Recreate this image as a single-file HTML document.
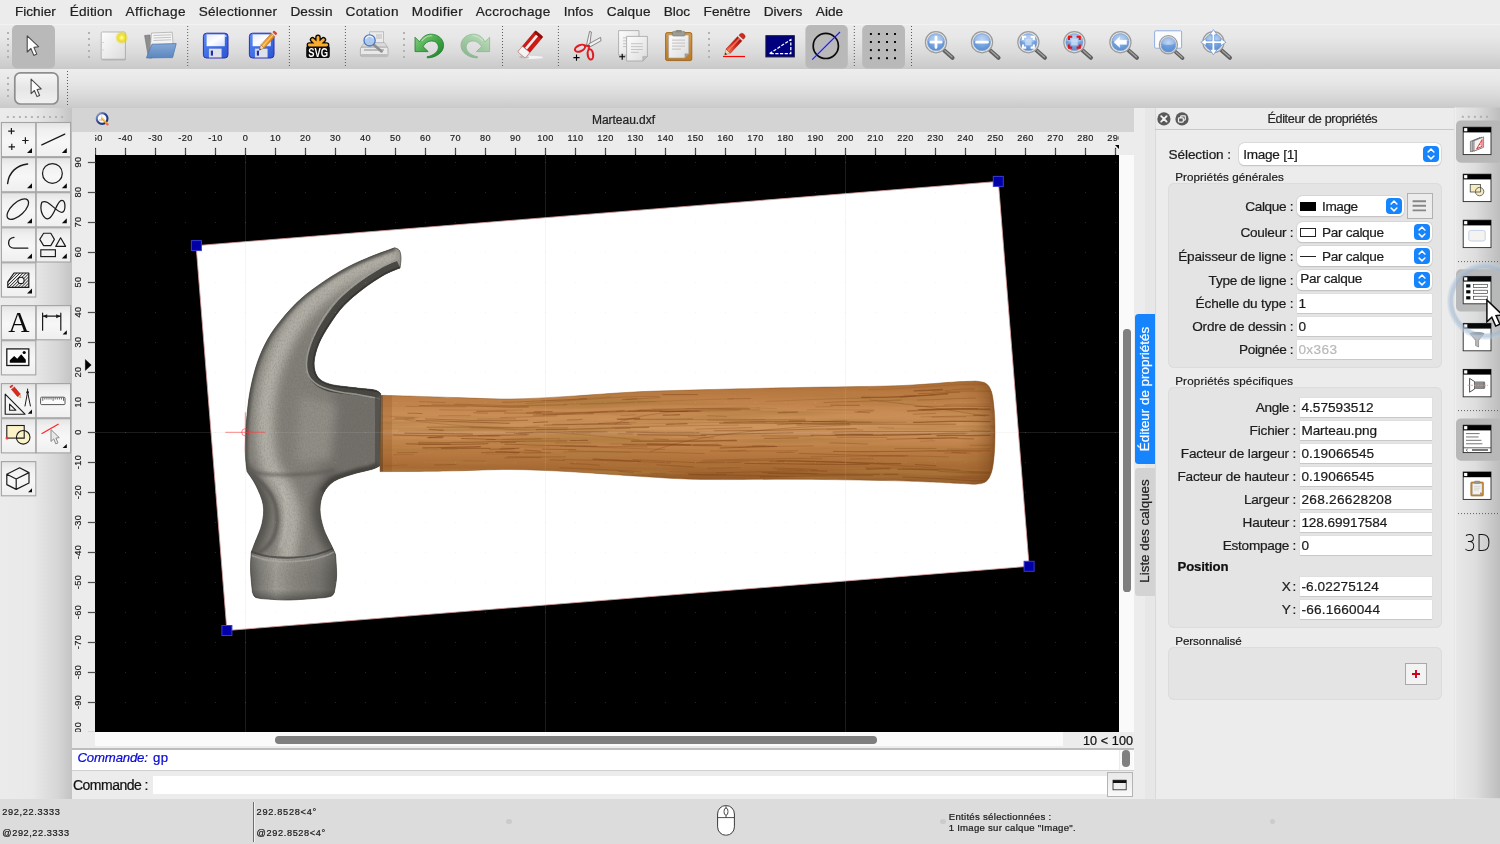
<!DOCTYPE html>
<html lang="fr"><head><meta charset="utf-8"><title>Marteau.dxf</title>
<style>
html,body{margin:0;padding:0;}
body{width:1500px;height:844px;overflow:hidden;background:#ececec;position:relative;
 font-family:"Liberation Sans",sans-serif;}
#app{position:absolute;left:0;top:0;width:1500px;height:844px;overflow:hidden;will-change:transform;}
.t{position:absolute;white-space:pre;font-family:"Liberation Sans",sans-serif;-webkit-text-stroke:.22px currentColor;}
svg{overflow:visible;display:block;}
svg.cv{overflow:hidden;}
</style></head>
<body><div id="app">
<!-- part_frame -->
<div class="menubar" style="position:absolute;left:0px;top:0px;width:1500px;height:24px;background:#ececec;"></div>
<span class="t" style="left:14.90px;top:3.63px;font-size:13.6px;line-height:16.32px;color:#222;letter-spacing:0.032px;">Fichier</span>
<span class="t" style="left:69.70px;top:3.63px;font-size:13.6px;line-height:16.32px;color:#222;letter-spacing:0.186px;">Édition</span>
<span class="t" style="left:125.60px;top:3.63px;font-size:13.6px;line-height:16.32px;color:#222;letter-spacing:0.430px;">Affichage</span>
<span class="t" style="left:198.70px;top:3.63px;font-size:13.6px;line-height:16.32px;color:#222;letter-spacing:0.263px;">Sélectionner</span>
<span class="t" style="left:290.40px;top:3.63px;font-size:13.6px;line-height:16.32px;color:#222;letter-spacing:0.126px;">Dessin</span>
<span class="t" style="left:345.50px;top:3.63px;font-size:13.6px;line-height:16.32px;color:#222;letter-spacing:0.335px;">Cotation</span>
<span class="t" style="left:411.70px;top:3.63px;font-size:13.6px;line-height:16.32px;color:#222;letter-spacing:0.404px;">Modifier</span>
<span class="t" style="left:475.70px;top:3.63px;font-size:13.6px;line-height:16.32px;color:#222;letter-spacing:0.309px;">Accrochage</span>
<span class="t" style="left:563.80px;top:3.63px;font-size:13.6px;line-height:16.32px;color:#222;letter-spacing:-0.021px;">Infos</span>
<span class="t" style="left:606.70px;top:3.63px;font-size:13.6px;line-height:16.32px;color:#222;letter-spacing:0.140px;">Calque</span>
<span class="t" style="left:663.70px;top:3.63px;font-size:13.6px;line-height:16.32px;color:#222;letter-spacing:-0.019px;">Bloc</span>
<span class="t" style="left:703.60px;top:3.63px;font-size:13.6px;line-height:16.32px;color:#222;letter-spacing:0.005px;">Fenêtre</span>
<span class="t" style="left:763.70px;top:3.63px;font-size:13.6px;line-height:16.32px;color:#222;letter-spacing:0.013px;">Divers</span>
<span class="t" style="left:815.80px;top:3.63px;font-size:13.6px;line-height:16.32px;color:#222;letter-spacing:0.027px;">Aide</span>
<div class="toolbar1" style="position:absolute;left:0px;top:24px;width:1500px;height:45px;background:linear-gradient(#f7f7f7 0%,#ebebeb 3%,#e7e7e7 30%,#dadada 65%,#c9c9c9 100%);"></div>
<div class="toolbar2" style="position:absolute;left:0px;top:69px;width:1500px;height:38.5px;background:linear-gradient(#ededed 0%,#e8e8e8 30%,#dbdbdb 65%,#cacaca 100%);"></div>
<div class="toolpanel" style="position:absolute;left:0px;top:107.5px;width:72px;height:691px;background:linear-gradient(90deg,#ebebeb 0%,#e9e9e9 45%,#d6d6d6 80%,#c3c3c3 100%);"></div>
<div class="tabbar" style="position:absolute;left:72px;top:107.5px;width:1062px;height:24px;background:#d4d4d4;"></div>
<span class="t" style="left:592.00px;top:113.34px;font-size:12px;line-height:14.40px;color:#222;letter-spacing:-0.036px;">Marteau.dxf</span>
<svg style="position:absolute;left:94px;top:110px;" width="18" height="18" viewBox="0 0 18 18"><defs><linearGradient id="gQ" x1="0" y1="0" x2="1" y2="1"><stop offset="0" stop-color="#a9b6d8"/><stop offset=".45" stop-color="#2a4592"/><stop offset="1" stop-color="#16307a"/></linearGradient></defs><circle cx="8.1" cy="8.5" r="5.4" fill="#fbfbfb" stroke="url(#gQ)" stroke-width="2.1"/><path d="M5 9.6 h3.4 M7.6 5.4 v5.2" stroke="#c9c9c9" stroke-width=".7"/><path d="M5.2 10.4 h3" stroke="#e9a0a0" stroke-width=".6"/><path d="M8.2 8.6 L12.6 13.4" stroke="#f7a416" stroke-width="2.1" stroke-linecap="round"/><path d="M8.4 8.2 L11 11" stroke="#ffd76a" stroke-width=".8" stroke-linecap="round"/><circle cx="13.3" cy="14.2" r="1.25" fill="#e46a6a"/></svg>
<div class="hruler" style="position:absolute;left:72px;top:131.5px;width:1062px;height:23.5px;background:#ececec;"></div>
<div class="vruler" style="position:absolute;left:72px;top:155px;width:23px;height:577px;background:#ececec;"></div>
<div class="canvas" style="position:absolute;left:95px;top:155px;width:1024px;height:577px;background:#000;"></div>
<div class="vscroll" style="position:absolute;left:1119px;top:155px;width:15px;height:577px;background:#fafafa;"></div>
<div style="position:absolute;left:1123.4px;top:329.4px;width:7.2px;height:262.3px;background:#7f7f7f;border-radius:3.6px;"></div>
<div style="position:absolute;left:72px;top:732px;width:1062px;height:14px;background:#fafafa;"></div>
<div style="position:absolute;left:72px;top:746px;width:1062px;height:2.5px;background:#ececec;"></div>
<div style="position:absolute;left:72px;top:732px;width:23px;height:16.5px;background:#ececec;"></div>
<div style="position:absolute;left:274.7px;top:736.1px;width:602px;height:7.6px;background:#7f7f7f;border-radius:3.8px;"></div>
<div style="position:absolute;left:1063px;top:732px;width:71px;height:16.5px;background:#ececec;"></div>
<span class="t" style="left:1083.00px;top:733.57px;font-size:12.6px;line-height:15.12px;color:#111;letter-spacing:0.086px;">10 &lt; 100</span>
<div style="position:absolute;left:1134px;top:107.5px;width:10.5px;height:691px;background:#ececec;"></div>
<div style="position:absolute;left:1144.5px;top:107.5px;width:10.5px;height:691px;background:#e7e7e7;"></div>
<div style="position:absolute;left:72px;top:748.3px;width:1062px;height:1.6px;background:#bdbdbd;"></div>
<div class="history" style="position:absolute;left:72px;top:749.9px;width:1062px;height:20.1px;background:#fff;"></div>
<div style="position:absolute;left:72px;top:770px;width:1062px;height:1px;background:#cfcfcf;"></div>
<span class="t" style="left:77.50px;top:750.41px;font-size:13.2px;line-height:15.84px;color:#0a0ad2;letter-spacing:-0.175px;font-style:italic;">Commande:</span>
<span class="t" style="left:153.00px;top:750.41px;font-size:13.2px;line-height:15.84px;color:#0a0ad2;letter-spacing:0.317px;">gp</span>
<div style="position:absolute;left:1118.6px;top:750px;width:14.4px;height:20px;background:#fafafa;border-left:1px solid #ebebeb;box-sizing:border-box;"></div>
<div style="position:absolute;left:1122.1px;top:750.2px;width:7.9px;height:16.5px;background:#7f7f7f;border-radius:4px;"></div>
<div class="cmdline" style="position:absolute;left:72px;top:771px;width:1062px;height:27.5px;background:#ececec;"></div>
<span class="t" style="left:73.00px;top:777.35px;font-size:14px;line-height:16.80px;color:#111;letter-spacing:-0.516px;">Commande :</span>
<div style="position:absolute;left:153px;top:775.7px;width:953.6px;height:18.5px;background:#fff;"></div>
<div style="position:absolute;left:1107.2px;top:772.4px;width:25.8px;height:25.1px;background:linear-gradient(#e9e9e9,#f9f9f9);border:1px solid #b4b4b4;box-sizing:border-box;"></div>
<svg style="position:absolute;left:1112.2px;top:779.2px;" width="16" height="13" viewBox="0 0 16 13"><rect x="1" y="1.2" width="13.2" height="9.6" fill="#eee" stroke="#222" stroke-width=".8"/><rect x="1" y="1.2" width="13.2" height="2.8" fill="#111"/></svg>
<div class="statusbar" style="position:absolute;left:0px;top:798.5px;width:1500px;height:45.5px;background:#dcdcdc;"></div>
<span class="t" style="left:2.30px;top:807.49px;font-size:9.2px;line-height:11.04px;color:#1a1a1a;letter-spacing:0.654px;">292,22.3333</span>
<span class="t" style="left:2.30px;top:827.89px;font-size:9.2px;line-height:11.04px;color:#1a1a1a;letter-spacing:0.573px;">@292,22.3333</span>
<div style="position:absolute;left:253px;top:802px;width:1px;height:40px;background:#6e6e6e;"></div>
<div style="position:absolute;left:254px;top:802px;width:1px;height:40px;background:#f2f2f2;"></div>
<span class="t" style="left:256.60px;top:807.49px;font-size:9.2px;line-height:11.04px;color:#1a1a1a;letter-spacing:0.706px;">292.8528&lt;4°</span>
<span class="t" style="left:256.60px;top:827.89px;font-size:9.2px;line-height:11.04px;color:#1a1a1a;letter-spacing:0.620px;">@292.8528&lt;4°</span>
<div style="position:absolute;left:506.3px;top:819px;width:5.4px;height:5.4px;background:#cbcbcb;border-radius:50%;"></div>
<div style="position:absolute;left:940.3px;top:819px;width:5.4px;height:5.4px;background:#cbcbcb;border-radius:50%;"></div>
<div style="position:absolute;left:1269.8px;top:819px;width:5.4px;height:5.4px;background:#cbcbcb;border-radius:50%;"></div>
<span class="t" style="left:948.70px;top:810.81px;font-size:9.6px;line-height:11.52px;color:#1a1a1a;letter-spacing:0.293px;">Entités sélectionnées :</span>
<span class="t" style="left:948.70px;top:822.41px;font-size:9.6px;line-height:11.52px;color:#1a1a1a;letter-spacing:0.251px;">1 Image sur calque "Image".</span>
<svg style="position:absolute;left:715px;top:803px;" width="22" height="35" viewBox="0 0 22 35"><rect x="2.6" y="2.6" width="16.8" height="29.6" rx="8" ry="8.4" fill="#fff" stroke="#3a3a3a" stroke-width="1"/><path d="M2.6 14.6 H19.4 M11 2.6 V14.6" stroke="#3a3a3a" stroke-width="0.9" fill="none"/><ellipse cx="11" cy="8.6" rx="2" ry="3.6" fill="#fff" stroke="#3a3a3a" stroke-width="0.9"/></svg>
<!-- part_canvas -->
<svg class="cv" style="position:absolute;left:0;top:0" width="1500" height="844" viewBox="0 0 1500 844"><defs><clipPath id="cvclip"><rect x="95" y="155" width="1024" height="577"/></clipPath><clipPath id="hrclip"><rect x="95" y="131.5" width="1024" height="23.5"/></clipPath><clipPath id="vrclip"><rect x="72" y="155" width="23" height="577"/></clipPath><clipPath id="headclip"><path d="M394.7 247.8 C390.9 249.2 379.9 253.0 372.2 256.1 C364.5 259.2 356.4 262.6 348.5 266.7 C340.6 270.8 332.7 275.6 324.8 280.9 C316.9 286.2 308.2 292.4 301.1 298.7 C294.0 305.0 287.6 312.2 282.1 318.9 C276.6 325.6 272.0 331.7 267.9 339.0 C263.8 346.3 260.3 354.0 257.3 362.7 C254.3 371.4 251.9 381.6 250.1 391.1 C248.3 400.6 247.4 411.5 246.6 419.6 C245.8 427.8 245.7 433.7 245.5 440.0 C245.3 446.3 245.2 452.1 245.5 457.4 C245.8 462.7 246.8 469.2 247.1 471.6 C248.6 474.0 253.4 480.3 256.1 485.8 C258.8 491.3 262.2 498.5 263.2 504.8 C264.2 511.1 263.4 517.4 262.0 523.7 C260.6 530.0 256.7 538.0 254.9 542.7 C253.1 547.5 251.9 550.6 251.3 552.2 C251.2 554.3 250.7 561.0 250.6 565.0 C250.5 569.0 250.6 571.3 250.9 575.9 C251.2 580.5 252.2 589.7 252.5 592.5 C252.9 593.2 253.6 596.0 255.0 597.0 C256.4 598.0 259.8 598.3 260.8 598.6 C265.5 598.8 278.5 600.2 289.2 600.0 C299.9 599.8 318.9 598.0 324.8 597.6 C325.9 597.3 329.9 596.9 331.5 596.0 C333.1 595.1 333.8 593.1 334.3 592.5 C334.7 589.7 336.4 582.2 336.6 575.9 C336.8 569.6 335.7 558.1 335.5 554.5 C334.9 553.1 332.5 547.7 331.9 546.3 C330.5 543.3 325.6 534.6 323.6 528.5 C321.6 522.4 320.0 515.4 320.0 509.5 C320.0 503.6 321.2 497.6 323.6 492.9 C326.0 488.2 329.4 484.2 334.3 481.1 C339.2 478.0 346.9 476.0 353.2 474.0 C359.5 472.0 367.8 470.6 372.2 469.2 C376.6 467.8 378.4 466.4 379.6 465.9 C379.8 453.8 380.4 405.6 380.6 393.5 C379.6 392.9 379.1 391.0 374.5 390.0 C369.9 389.0 360.7 388.6 353.2 387.6 C345.7 386.6 335.4 385.8 329.5 384.0 C323.6 382.2 320.3 380.4 317.7 376.9 C315.1 373.3 313.9 368.2 314.1 362.7 C314.3 357.2 316.3 350.0 318.9 343.7 C321.5 337.4 325.4 331.1 329.5 324.8 C333.6 318.5 338.2 311.7 343.7 305.8 C349.2 299.9 356.0 294.3 362.7 289.2 C369.4 284.1 377.8 278.6 384.0 275.0 C390.2 271.4 397.4 269.1 400.1 267.9 C400.2 266.2 401.1 260.9 401.0 258.0 C400.9 255.1 400.4 252.0 399.4 250.3 C398.3 248.6 395.5 248.2 394.7 247.8 Z"/></clipPath><clipPath id="handclip"><path d="M380 395.3 C386.7 395.5 407.0 396.0 420.0 396.4 C433.0 396.8 442.9 397.2 458.0 397.6 C473.1 398.0 492.5 399.2 510.8 399.0 C529.1 398.8 547.5 397.6 568.0 396.4 C588.5 395.2 612.0 393.1 634.0 392.0 C656.0 390.9 672.3 390.6 700.0 389.8 C727.7 389.1 768.7 388.1 800.0 387.5 C831.3 386.9 866.3 386.6 888.0 386.0 C909.7 385.4 919.0 384.5 930.0 383.8 C941.0 383.1 946.3 382.4 954.0 382.0 C961.7 381.6 972.3 381.2 976.0 381.1 C977.7 381.5 983.4 381.6 986.0 383.4 C988.6 385.2 990.2 387.6 991.6 392.0 C993.0 396.4 993.6 403.3 994.2 410.0 C994.8 416.7 995.0 424.5 995.0 432.0 C995.0 439.5 994.8 448.3 994.2 455.0 C993.6 461.7 993.0 467.6 991.6 472.0 C990.2 476.4 988.6 479.6 986.0 481.6 C983.4 483.7 977.7 483.9 976.0 484.3 C972.3 484.1 961.7 483.6 954.0 483.2 C946.3 482.8 941.0 482.4 930.0 482.0 C919.0 481.6 909.7 481.1 888.0 480.6 C866.3 480.2 831.3 479.5 800.0 479.3 C768.7 479.1 727.7 479.9 700.0 479.4 C672.3 478.8 656.0 477.3 634.0 476.0 C612.0 474.7 588.5 472.7 568.0 471.6 C547.5 470.5 529.1 469.6 510.8 469.5 C492.5 469.4 473.1 470.5 458.0 470.8 C442.9 471.1 433.0 471.3 420.0 471.4 C407.0 471.5 386.7 471.6 380.0 471.6 Z"/></clipPath><linearGradient id="gHead" x1="245" y1="0" x2="381" y2="0" gradientUnits="userSpaceOnUse"><stop offset="0" stop-color="#6f6d67"/><stop offset=".06" stop-color="#8f8d86"/><stop offset=".22" stop-color="#aeaca5"/><stop offset=".42" stop-color="#98968f"/><stop offset=".7" stop-color="#86847d"/><stop offset="1" stop-color="#6a6862"/></linearGradient><linearGradient id="gClaw" x1="270" y1="300" x2="330" y2="345" gradientUnits="userSpaceOnUse"><stop offset="0" stop-color="#77756f"/><stop offset=".3" stop-color="#a6a49d"/><stop offset=".62" stop-color="#9a9891"/><stop offset=".8" stop-color="#6e6c66"/><stop offset="1" stop-color="#4a4843"/></linearGradient><linearGradient id="gCyl" x1="250" y1="0" x2="337" y2="0" gradientUnits="userSpaceOnUse"><stop offset="0" stop-color="#5d5b56"/><stop offset=".12" stop-color="#7f7d77"/><stop offset=".3" stop-color="#a19e96"/><stop offset=".5" stop-color="#8a877f"/><stop offset=".8" stop-color="#77756f"/><stop offset="1" stop-color="#55534e"/></linearGradient><linearGradient id="gCylV" x1="0" y1="548" x2="0" y2="600" gradientUnits="userSpaceOnUse"><stop offset="0" stop-color="#000" stop-opacity=".25"/><stop offset=".18" stop-color="#fff" stop-opacity=".08"/><stop offset=".8" stop-color="#000" stop-opacity="0"/><stop offset="1" stop-color="#000" stop-opacity=".35"/></linearGradient><linearGradient id="gNeck" x1="254" y1="0" x2="332" y2="0" gradientUnits="userSpaceOnUse"><stop offset="0" stop-color="#5a5853"/><stop offset=".2" stop-color="#7b7973"/><stop offset=".42" stop-color="#a19f98"/><stop offset=".62" stop-color="#8d8b84"/><stop offset=".85" stop-color="#716f69"/><stop offset="1" stop-color="#504e49"/></linearGradient><linearGradient id="gWood" x1="0" y1="382" x2="0" y2="484" gradientUnits="userSpaceOnUse"><stop offset="0" stop-color="#a86a33"/><stop offset=".1" stop-color="#b97a42"/><stop offset=".3" stop-color="#c88c54"/><stop offset=".45" stop-color="#ce955e"/><stop offset=".68" stop-color="#bb7c43"/><stop offset=".88" stop-color="#a26630"/><stop offset="1" stop-color="#885024"/></linearGradient><linearGradient id="gWoodEnd" x1="960" y1="0" x2="996" y2="0" gradientUnits="userSpaceOnUse"><stop offset="0" stop-color="#7a4316" stop-opacity="0"/><stop offset=".45" stop-color="#7a4316" stop-opacity=".12"/><stop offset=".8" stop-color="#6e3a12" stop-opacity=".38"/><stop offset="1" stop-color="#5a2e0c" stop-opacity=".6"/></linearGradient><filter id="fWood" x="0" y="0" width="100%" height="100%"><feTurbulence type="fractalNoise" baseFrequency="0.006 0.16" numOctaves="3" seed="4" result="n"/><feColorMatrix in="n" type="matrix" values="0 0 0 0 0.42  0 0 0 0 0.2  0 0 0 0 0.05  0 0 0 -2.6 1.45"/></filter><filter id="fMetal" x="0" y="0" width="100%" height="100%"><feTurbulence type="fractalNoise" baseFrequency="0.7 0.5" numOctaves="2" seed="9" result="n"/><feColorMatrix in="n" type="matrix" values="0 0 0 0 0.1  0 0 0 0 0.1  0 0 0 0 0.1  0 0 0 -1.6 0.95"/></filter><filter id="fB6" x="-20%" y="-20%" width="140%" height="140%"><feGaussianBlur stdDeviation="5"/></filter><filter id="fB2" x="-20%" y="-20%" width="140%" height="140%"><feGaussianBlur stdDeviation="1.6"/></filter><pattern id="grid" x="245.0" y="432.0" width="30" height="30" patternUnits="userSpaceOnUse"><rect x="0" y="0" width="1" height="1" fill="#c8c8c8" fill-opacity=".2"/></pattern></defs><g clip-path="url(#hrclip)" font-family="Liberation Sans, sans-serif" font-size="9.2" fill="#1c1c1c" stroke="#1c1c1c" stroke-width=".18" letter-spacing=".45"><rect x="65" y="148" width="1" height="7" fill="#5e5e5e"/><text x="65.5" y="141.3" text-anchor="middle">-60</text><rect x="95" y="148" width="1" height="7" fill="#5e5e5e"/><text x="95.5" y="141.3" text-anchor="middle">-50</text><rect x="125" y="148" width="1" height="7" fill="#5e5e5e"/><text x="125.5" y="141.3" text-anchor="middle">-40</text><rect x="155" y="148" width="1" height="7" fill="#5e5e5e"/><text x="155.5" y="141.3" text-anchor="middle">-30</text><rect x="185" y="148" width="1" height="7" fill="#5e5e5e"/><text x="185.5" y="141.3" text-anchor="middle">-20</text><rect x="215" y="148" width="1" height="7" fill="#5e5e5e"/><text x="215.5" y="141.3" text-anchor="middle">-10</text><rect x="245" y="148" width="1" height="7" fill="#5e5e5e"/><text x="245.5" y="141.3" text-anchor="middle">0</text><rect x="275" y="148" width="1" height="7" fill="#5e5e5e"/><text x="275.5" y="141.3" text-anchor="middle">10</text><rect x="305" y="148" width="1" height="7" fill="#5e5e5e"/><text x="305.5" y="141.3" text-anchor="middle">20</text><rect x="335" y="148" width="1" height="7" fill="#5e5e5e"/><text x="335.5" y="141.3" text-anchor="middle">30</text><rect x="365" y="148" width="1" height="7" fill="#5e5e5e"/><text x="365.5" y="141.3" text-anchor="middle">40</text><rect x="395" y="148" width="1" height="7" fill="#5e5e5e"/><text x="395.5" y="141.3" text-anchor="middle">50</text><rect x="425" y="148" width="1" height="7" fill="#5e5e5e"/><text x="425.5" y="141.3" text-anchor="middle">60</text><rect x="455" y="148" width="1" height="7" fill="#5e5e5e"/><text x="455.5" y="141.3" text-anchor="middle">70</text><rect x="485" y="148" width="1" height="7" fill="#5e5e5e"/><text x="485.5" y="141.3" text-anchor="middle">80</text><rect x="515" y="148" width="1" height="7" fill="#5e5e5e"/><text x="515.5" y="141.3" text-anchor="middle">90</text><rect x="545" y="148" width="1" height="7" fill="#5e5e5e"/><text x="545.5" y="141.3" text-anchor="middle">100</text><rect x="575" y="148" width="1" height="7" fill="#5e5e5e"/><text x="575.5" y="141.3" text-anchor="middle">110</text><rect x="605" y="148" width="1" height="7" fill="#5e5e5e"/><text x="605.5" y="141.3" text-anchor="middle">120</text><rect x="635" y="148" width="1" height="7" fill="#5e5e5e"/><text x="635.5" y="141.3" text-anchor="middle">130</text><rect x="665" y="148" width="1" height="7" fill="#5e5e5e"/><text x="665.5" y="141.3" text-anchor="middle">140</text><rect x="695" y="148" width="1" height="7" fill="#5e5e5e"/><text x="695.5" y="141.3" text-anchor="middle">150</text><rect x="725" y="148" width="1" height="7" fill="#5e5e5e"/><text x="725.5" y="141.3" text-anchor="middle">160</text><rect x="755" y="148" width="1" height="7" fill="#5e5e5e"/><text x="755.5" y="141.3" text-anchor="middle">170</text><rect x="785" y="148" width="1" height="7" fill="#5e5e5e"/><text x="785.5" y="141.3" text-anchor="middle">180</text><rect x="815" y="148" width="1" height="7" fill="#5e5e5e"/><text x="815.5" y="141.3" text-anchor="middle">190</text><rect x="845" y="148" width="1" height="7" fill="#5e5e5e"/><text x="845.5" y="141.3" text-anchor="middle">200</text><rect x="875" y="148" width="1" height="7" fill="#5e5e5e"/><text x="875.5" y="141.3" text-anchor="middle">210</text><rect x="905" y="148" width="1" height="7" fill="#5e5e5e"/><text x="905.5" y="141.3" text-anchor="middle">220</text><rect x="935" y="148" width="1" height="7" fill="#5e5e5e"/><text x="935.5" y="141.3" text-anchor="middle">230</text><rect x="965" y="148" width="1" height="7" fill="#5e5e5e"/><text x="965.5" y="141.3" text-anchor="middle">240</text><rect x="995" y="148" width="1" height="7" fill="#5e5e5e"/><text x="995.5" y="141.3" text-anchor="middle">250</text><rect x="1025" y="148" width="1" height="7" fill="#5e5e5e"/><text x="1025.5" y="141.3" text-anchor="middle">260</text><rect x="1055" y="148" width="1" height="7" fill="#5e5e5e"/><text x="1055.5" y="141.3" text-anchor="middle">270</text><rect x="1085" y="148" width="1" height="7" fill="#5e5e5e"/><text x="1085.5" y="141.3" text-anchor="middle">280</text><rect x="1115" y="148" width="1" height="7" fill="#5e5e5e"/><text x="1115.5" y="141.3" text-anchor="middle">290</text><rect x="1145" y="148" width="1" height="7" fill="#5e5e5e"/><text x="1145.5" y="141.3" text-anchor="middle">300</text></g><g clip-path="url(#hrclip)"><path d="M1115 145 L1127 145 L1121 151 Z" fill="#000"/></g><g clip-path="url(#vrclip)" font-family="Liberation Sans, sans-serif" font-size="9.2" fill="#1c1c1c" stroke="#1c1c1c" stroke-width=".18" letter-spacing=".45"><rect x="88" y="762" width="7" height="1" fill="#5e5e5e"/><text transform="translate(81.4 761.9) rotate(-90)" text-anchor="middle">-110</text><rect x="88" y="732" width="7" height="1" fill="#5e5e5e"/><text transform="translate(81.4 731.9) rotate(-90)" text-anchor="middle">-100</text><rect x="88" y="702" width="7" height="1" fill="#5e5e5e"/><text transform="translate(81.4 701.9) rotate(-90)" text-anchor="middle">-90</text><rect x="88" y="672" width="7" height="1" fill="#5e5e5e"/><text transform="translate(81.4 671.9) rotate(-90)" text-anchor="middle">-80</text><rect x="88" y="642" width="7" height="1" fill="#5e5e5e"/><text transform="translate(81.4 641.9) rotate(-90)" text-anchor="middle">-70</text><rect x="88" y="612" width="7" height="1" fill="#5e5e5e"/><text transform="translate(81.4 611.9) rotate(-90)" text-anchor="middle">-60</text><rect x="88" y="582" width="7" height="1" fill="#5e5e5e"/><text transform="translate(81.4 581.9) rotate(-90)" text-anchor="middle">-50</text><rect x="88" y="552" width="7" height="1" fill="#5e5e5e"/><text transform="translate(81.4 551.9) rotate(-90)" text-anchor="middle">-40</text><rect x="88" y="522" width="7" height="1" fill="#5e5e5e"/><text transform="translate(81.4 521.9) rotate(-90)" text-anchor="middle">-30</text><rect x="88" y="492" width="7" height="1" fill="#5e5e5e"/><text transform="translate(81.4 491.9) rotate(-90)" text-anchor="middle">-20</text><rect x="88" y="462" width="7" height="1" fill="#5e5e5e"/><text transform="translate(81.4 461.9) rotate(-90)" text-anchor="middle">-10</text><rect x="88" y="432" width="7" height="1" fill="#5e5e5e"/><text transform="translate(81.4 431.9) rotate(-90)" text-anchor="middle">0</text><rect x="88" y="402" width="7" height="1" fill="#5e5e5e"/><text transform="translate(81.4 401.9) rotate(-90)" text-anchor="middle">10</text><rect x="88" y="372" width="7" height="1" fill="#5e5e5e"/><text transform="translate(81.4 371.9) rotate(-90)" text-anchor="middle">20</text><rect x="88" y="342" width="7" height="1" fill="#5e5e5e"/><text transform="translate(81.4 341.9) rotate(-90)" text-anchor="middle">30</text><rect x="88" y="312" width="7" height="1" fill="#5e5e5e"/><text transform="translate(81.4 311.9) rotate(-90)" text-anchor="middle">40</text><rect x="88" y="282" width="7" height="1" fill="#5e5e5e"/><text transform="translate(81.4 281.9) rotate(-90)" text-anchor="middle">50</text><rect x="88" y="252" width="7" height="1" fill="#5e5e5e"/><text transform="translate(81.4 251.9) rotate(-90)" text-anchor="middle">60</text><rect x="88" y="222" width="7" height="1" fill="#5e5e5e"/><text transform="translate(81.4 221.9) rotate(-90)" text-anchor="middle">70</text><rect x="88" y="192" width="7" height="1" fill="#5e5e5e"/><text transform="translate(81.4 191.9) rotate(-90)" text-anchor="middle">80</text><rect x="88" y="162" width="7" height="1" fill="#5e5e5e"/><text transform="translate(81.4 161.9) rotate(-90)" text-anchor="middle">90</text><rect x="88" y="132" width="7" height="1" fill="#5e5e5e"/><text transform="translate(81.4 131.9) rotate(-90)" text-anchor="middle">100</text><path d="M85.2 359.3 L91.4 365 L85.2 370.7 Z" fill="#000"/></g><g clip-path="url(#cvclip)"><g transform="translate(226.9 630.5) rotate(-4.57593512)"><rect x="0" y="-386.1" width="804.8" height="386.1" fill="#fff" stroke="#d8a0a0" stroke-width=".8"/></g><path d="M380 395.3 C386.7 395.5 407.0 396.0 420.0 396.4 C433.0 396.8 442.9 397.2 458.0 397.6 C473.1 398.0 492.5 399.2 510.8 399.0 C529.1 398.8 547.5 397.6 568.0 396.4 C588.5 395.2 612.0 393.1 634.0 392.0 C656.0 390.9 672.3 390.6 700.0 389.8 C727.7 389.1 768.7 388.1 800.0 387.5 C831.3 386.9 866.3 386.6 888.0 386.0 C909.7 385.4 919.0 384.5 930.0 383.8 C941.0 383.1 946.3 382.4 954.0 382.0 C961.7 381.6 972.3 381.2 976.0 381.1 C977.7 381.5 983.4 381.6 986.0 383.4 C988.6 385.2 990.2 387.6 991.6 392.0 C993.0 396.4 993.6 403.3 994.2 410.0 C994.8 416.7 995.0 424.5 995.0 432.0 C995.0 439.5 994.8 448.3 994.2 455.0 C993.6 461.7 993.0 467.6 991.6 472.0 C990.2 476.4 988.6 479.6 986.0 481.6 C983.4 483.7 977.7 483.9 976.0 484.3 C972.3 484.1 961.7 483.6 954.0 483.2 C946.3 482.8 941.0 482.4 930.0 482.0 C919.0 481.6 909.7 481.1 888.0 480.6 C866.3 480.2 831.3 479.5 800.0 479.3 C768.7 479.1 727.7 479.9 700.0 479.4 C672.3 478.8 656.0 477.3 634.0 476.0 C612.0 474.7 588.5 472.7 568.0 471.6 C547.5 470.5 529.1 469.6 510.8 469.5 C492.5 469.4 473.1 470.5 458.0 470.8 C442.9 471.1 433.0 471.3 420.0 471.4 C407.0 471.5 386.7 471.6 380.0 471.6 Z" fill="url(#gWood)"/><g clip-path="url(#handclip)"><rect x="378" y="378" width="620" height="110" filter="url(#fWood)" opacity=".75"/><g stroke="#7d4216" fill="none" stroke-linecap="round"><path d="M714.3 430.7 C717.6 430.7 727.8 430.7 734.6 430.7 C741.3 430.7 748.1 430.6 754.9 430.6 C761.6 430.5 768.4 430.3 775.2 430.2 C781.9 430.0 788.7 429.8 795.5 429.6 C802.2 429.5 809.0 429.3 815.8 429.2 C822.6 429.0 829.3 428.9 836.1 428.8 C842.9 428.6 853.0 428.5 856.4 428.5" stroke-opacity="0.40" stroke-width="1.0"/><path d="M686.0 408.7 C689.1 408.7 698.3 408.8 704.4 408.7 C710.5 408.7 716.7 408.6 722.8 408.5 C728.9 408.5 735.0 408.3 741.2 408.2 C747.3 408.1 756.5 407.8 759.5 407.7" stroke-opacity="0.24" stroke-width="0.7"/><path d="M861.7 397.4 C865.3 397.3 876.0 397.4 883.2 397.3 C890.4 397.1 897.6 396.8 904.8 396.5 C911.9 396.2 919.1 395.8 926.3 395.4 C933.5 394.9 944.2 394.0 947.8 393.7" stroke-opacity="0.59" stroke-width="1.3"/><path d="M747.2 446.5 C748.7 446.4 753.1 446.2 756.0 446.0 C759.0 445.8 763.4 445.6 764.9 445.5" stroke-opacity="0.41" stroke-width="0.5"/><path d="M526.7 412.9 C527.9 412.8 531.5 412.8 533.8 412.8 C536.2 412.7 539.7 412.7 540.9 412.7" stroke-opacity="0.38" stroke-width="1.2"/><path d="M761.8 435.8 C764.6 435.8 773.2 435.9 778.9 435.9 C784.6 436.0 790.4 436.0 796.1 436.0 C801.8 436.0 810.4 436.0 813.2 436.0" stroke-opacity="0.38" stroke-width="0.7"/><path d="M971.5 481.3 C973.0 481.4 977.6 481.6 980.7 481.8 C983.8 481.9 988.5 482.0 990.0 482.0" stroke-opacity="0.33" stroke-width="0.7"/><path d="M425.4 418.9 C428.8 419.0 439.0 419.4 445.8 419.6 C452.7 419.8 459.5 420.0 466.3 420.2 C473.1 420.4 479.9 420.5 486.7 420.6 C493.5 420.7 500.3 420.8 507.1 420.8 C513.9 420.7 524.1 420.3 527.5 420.2" stroke-opacity="0.54" stroke-width="0.8"/><path d="M883.9 474.3 C885.1 474.3 888.6 474.3 890.9 474.3 C893.2 474.3 896.7 474.4 897.9 474.4" stroke-opacity="0.56" stroke-width="0.9"/><path d="M618.5 471.4 C619.7 471.5 623.4 471.8 625.9 472.0 C628.3 472.3 632.0 472.6 633.3 472.7" stroke-opacity="0.51" stroke-width="0.7"/><path d="M580.2 404.5 C583.9 404.4 594.8 404.0 602.1 403.7 C609.4 403.4 616.8 403.0 624.1 402.7 C631.4 402.4 638.7 402.1 646.0 401.8 C653.3 401.5 660.6 401.3 667.9 401.0 C675.2 400.7 682.5 400.4 689.8 400.1 C697.1 399.8 704.4 399.6 711.7 399.4 C719.0 399.2 730.0 398.9 733.6 398.8" stroke-opacity="0.25" stroke-width="0.7"/><path d="M419.3 405.5 C423.0 405.5 433.9 405.6 441.2 405.7 C448.5 405.7 455.8 405.8 463.1 405.9 C470.3 406.1 477.6 406.2 484.9 406.4 C492.2 406.6 499.5 407.0 506.8 407.0 C514.1 407.1 525.0 406.8 528.6 406.8" stroke-opacity="0.42" stroke-width="0.9"/><path d="M815.8 406.9 C817.2 406.9 821.3 406.8 824.1 406.8 C826.9 406.7 831.0 406.7 832.4 406.6" stroke-opacity="0.25" stroke-width="0.8"/><path d="M543.2 414.8 C546.4 414.6 556.1 414.2 562.6 414.0 C569.1 413.7 575.6 413.3 582.0 413.0 C588.5 412.7 595.0 412.4 601.5 412.1 C607.9 411.8 614.4 411.5 620.9 411.3 C627.4 411.1 633.8 411.0 640.3 410.9 C646.8 410.9 653.3 410.9 659.7 410.9 C666.2 411.0 672.7 411.0 679.2 411.1 C685.6 411.1 695.3 411.2 698.6 411.2" stroke-opacity="0.32" stroke-width="1.2"/><path d="M616.6 411.3 C620.1 411.3 630.3 411.0 637.2 411.0 C644.1 411.0 650.9 411.1 657.8 411.1 C664.6 411.2 671.5 411.2 678.4 411.2 C685.2 411.2 692.1 411.2 699.0 411.1 C705.8 411.0 712.7 410.9 719.5 410.7 C726.4 410.5 736.7 410.2 740.1 410.1" stroke-opacity="0.24" stroke-width="1.3"/><path d="M536.4 413.9 C539.8 413.8 550.2 413.5 557.1 413.3 C564.0 413.1 570.9 412.9 577.8 412.8 C584.7 412.6 591.6 412.4 598.5 412.3 C605.4 412.2 612.3 412.0 619.2 411.9 C626.1 411.8 636.5 411.6 639.9 411.5" stroke-opacity="0.32" stroke-width="0.6"/><path d="M727.8 398.9 C729.7 398.8 735.4 398.7 739.2 398.7 C743.1 398.6 748.8 398.5 750.7 398.5" stroke-opacity="0.35" stroke-width="0.9"/><path d="M669.4 471.5 C672.9 471.7 683.5 472.2 690.6 472.4 C697.6 472.6 704.7 472.8 711.7 472.9 C718.8 473.1 729.4 473.2 732.9 473.2" stroke-opacity="0.27" stroke-width="0.6"/><path d="M866.5 469.0 C868.4 469.0 874.3 468.8 878.2 468.7 C882.1 468.6 887.9 468.5 889.8 468.5" stroke-opacity="0.50" stroke-width="1.3"/><path d="M944.6 404.6 C947.1 404.5 954.7 404.3 959.7 404.2 C964.8 404.2 969.8 404.1 974.9 404.1 C979.9 404.1 987.5 404.1 990.0 404.1" stroke-opacity="0.37" stroke-width="0.6"/><path d="M952.0 389.5 C953.9 389.5 959.5 389.3 963.2 389.2 C967.0 389.1 972.6 388.9 974.5 388.8" stroke-opacity="0.30" stroke-width="1.2"/><path d="M557.1 440.1 C558.7 440.1 563.3 440.2 566.4 440.3 C569.5 440.4 574.2 440.6 575.7 440.6" stroke-opacity="0.23" stroke-width="0.7"/><path d="M886.9 439.2 C889.9 439.2 898.7 439.0 904.6 438.9 C910.5 438.7 916.3 438.5 922.2 438.4 C928.1 438.2 934.0 438.0 939.9 437.9 C945.8 437.7 954.6 437.5 957.5 437.4" stroke-opacity="0.57" stroke-width="0.7"/><path d="M542.8 400.9 C546.5 400.7 557.4 400.4 564.7 400.0 C572.0 399.6 583.0 398.9 586.6 398.6" stroke-opacity="0.27" stroke-width="0.8"/><path d="M461.6 438.5 C464.4 438.6 472.9 438.8 478.5 438.9 C484.1 439.1 492.5 439.4 495.3 439.5" stroke-opacity="0.59" stroke-width="1.0"/><path d="M728.8 450.9 C730.2 450.9 734.5 450.7 737.3 450.6 C740.1 450.5 744.4 450.3 745.8 450.2" stroke-opacity="0.21" stroke-width="1.2"/><path d="M952.0 452.4 C953.2 452.4 956.7 452.6 959.1 452.6 C961.4 452.7 964.9 452.8 966.1 452.9" stroke-opacity="0.39" stroke-width="1.1"/><path d="M973.6 415.2 C974.9 415.2 978.6 415.1 981.0 415.1 C983.5 415.1 987.2 415.0 988.5 415.0" stroke-opacity="0.49" stroke-width="1.2"/><path d="M799.2 453.4 C802.8 453.5 813.6 453.8 820.9 454.1 C828.1 454.3 835.3 454.5 842.5 454.7 C849.8 454.9 857.0 455.1 864.2 455.3 C871.4 455.4 878.7 455.5 885.9 455.6 C893.1 455.7 904.0 455.7 907.6 455.8" stroke-opacity="0.34" stroke-width="1.0"/><path d="M897.9 469.3 C901.3 469.3 911.3 469.4 918.0 469.6 C924.7 469.7 934.7 470.0 938.1 470.1" stroke-opacity="0.55" stroke-width="1.0"/><path d="M609.6 443.9 C613.2 443.9 624.0 443.9 631.2 443.9 C638.4 443.9 645.6 444.0 652.9 444.0 C660.1 444.0 670.9 444.2 674.5 444.2" stroke-opacity="0.23" stroke-width="1.0"/><path d="M903.1 477.0 C906.7 477.1 917.6 477.5 924.8 477.9 C932.1 478.2 939.3 478.7 946.5 479.1 C953.8 479.6 961.0 480.2 968.3 480.5 C975.5 480.8 986.4 480.9 990.0 481.0" stroke-opacity="0.49" stroke-width="1.0"/><path d="M878.6 427.5 C879.9 427.6 883.7 427.7 886.2 427.8 C888.7 427.9 892.4 428.0 893.7 428.1" stroke-opacity="0.21" stroke-width="1.0"/><path d="M519.8 433.0 C523.5 432.9 534.4 432.6 541.6 432.5 C548.9 432.3 556.1 432.1 563.4 432.1 C570.7 432.0 577.9 431.9 585.2 431.9 C592.5 431.9 603.4 432.0 607.0 432.0" stroke-opacity="0.45" stroke-width="1.2"/><path d="M390.7 416.5 C393.0 416.6 399.9 416.9 404.5 417.1 C409.1 417.3 416.0 417.5 418.3 417.6" stroke-opacity="0.28" stroke-width="0.6"/><path d="M773.4 468.1 C777.0 468.2 787.8 468.5 795.0 468.7 C802.3 468.9 813.1 469.4 816.7 469.6" stroke-opacity="0.33" stroke-width="1.0"/><path d="M638.2 410.2 C641.3 410.2 650.6 409.9 656.8 409.7 C663.0 409.6 669.2 409.4 675.4 409.3 C681.6 409.1 687.8 409.0 693.9 408.9 C700.1 408.9 706.3 408.8 712.5 408.7 C718.7 408.7 724.9 408.7 731.1 408.7 C737.3 408.7 746.6 408.8 749.7 408.8" stroke-opacity="0.55" stroke-width="0.8"/><path d="M570.7 440.5 C572.1 440.5 576.3 440.5 579.1 440.5 C581.9 440.5 586.1 440.4 587.5 440.4" stroke-opacity="0.53" stroke-width="1.2"/><path d="M944.5 453.0 C946.6 453.0 953.0 453.1 957.2 453.1 C961.5 453.1 967.9 453.2 970.0 453.2" stroke-opacity="0.38" stroke-width="0.7"/><path d="M628.3 411.3 C631.3 411.2 640.4 411.2 646.4 411.2 C652.5 411.2 658.6 411.3 664.6 411.3 C670.7 411.3 676.7 411.3 682.8 411.3 C688.9 411.3 698.0 411.2 701.0 411.2" stroke-opacity="0.33" stroke-width="1.2"/><path d="M651.0 473.5 C652.2 473.5 655.9 473.5 658.4 473.5 C660.9 473.5 664.6 473.5 665.8 473.5" stroke-opacity="0.55" stroke-width="0.5"/><path d="M720.6 451.5 C723.0 451.5 730.1 451.5 734.8 451.5 C739.5 451.5 746.6 451.6 749.0 451.6" stroke-opacity="0.21" stroke-width="0.6"/><path d="M398.6 430.9 C401.8 430.8 411.6 430.8 418.1 430.7 C424.6 430.6 431.2 430.5 437.7 430.5 C444.2 430.4 450.7 430.4 457.2 430.3 C463.7 430.3 470.2 430.2 476.8 430.2 C483.3 430.2 489.8 430.2 496.3 430.2 C502.8 430.3 512.6 430.4 515.8 430.4" stroke-opacity="0.26" stroke-width="0.5"/><path d="M647.4 444.0 C650.5 444.0 659.7 444.1 665.8 444.2 C671.9 444.3 678.1 444.5 684.2 444.6 C690.3 444.8 696.4 445.0 702.6 445.1 C708.7 445.2 717.9 445.3 721.0 445.3" stroke-opacity="0.52" stroke-width="1.3"/><path d="M501.6 447.1 C504.3 447.1 512.2 447.1 517.6 447.1 C522.9 447.0 528.2 447.1 533.5 447.0 C538.8 447.0 546.8 446.9 549.5 446.9" stroke-opacity="0.20" stroke-width="0.9"/><path d="M489.7 449.3 C491.8 449.3 498.0 449.1 502.2 449.0 C506.4 448.9 512.7 448.8 514.8 448.7" stroke-opacity="0.48" stroke-width="0.9"/><path d="M830.2 442.9 C833.3 443.0 842.6 443.3 848.8 443.5 C855.0 443.7 864.3 444.0 867.4 444.1" stroke-opacity="0.56" stroke-width="0.6"/><path d="M810.2 470.7 C811.6 470.7 815.7 470.8 818.5 470.9 C821.2 471.0 825.4 471.1 826.7 471.1" stroke-opacity="0.45" stroke-width="1.2"/><path d="M719.6 423.2 C723.2 423.2 734.0 423.1 741.3 423.1 C748.5 423.1 755.7 423.1 762.9 423.1 C770.1 423.2 777.4 423.2 784.6 423.3 C791.8 423.4 799.0 423.4 806.3 423.5 C813.5 423.6 820.7 423.7 827.9 423.7 C835.1 423.7 846.0 423.7 849.6 423.7" stroke-opacity="0.58" stroke-width="0.9"/><path d="M504.9 444.2 C508.0 444.3 517.2 444.5 523.3 444.7 C529.5 444.9 535.6 445.1 541.8 445.2 C547.9 445.4 554.0 445.5 560.2 445.6 C566.3 445.7 572.5 445.9 578.6 446.0 C584.8 446.1 594.0 446.2 597.1 446.3" stroke-opacity="0.46" stroke-width="1.1"/><path d="M915.0 406.5 C918.1 406.5 927.5 406.4 933.7 406.3 C940.0 406.3 946.2 406.1 952.5 406.0 C958.7 406.0 965.0 406.0 971.2 406.1 C977.5 406.1 986.9 406.3 990.0 406.3" stroke-opacity="0.41" stroke-width="1.1"/><path d="M920.9 416.9 C923.8 416.8 932.4 416.7 938.2 416.6 C943.9 416.4 949.7 416.2 955.4 416.1 C961.2 415.9 967.0 415.9 972.7 415.8 C978.5 415.7 987.1 415.6 990.0 415.5" stroke-opacity="0.23" stroke-width="0.9"/><path d="M837.3 437.3 C840.0 437.3 848.3 437.3 853.8 437.3 C859.3 437.3 864.8 437.3 870.4 437.4 C875.9 437.4 884.1 437.4 886.9 437.4" stroke-opacity="0.52" stroke-width="0.6"/><path d="M486.0 454.3 C488.6 454.3 496.3 454.1 501.4 454.1 C506.6 454.1 514.3 454.1 516.8 454.1" stroke-opacity="0.26" stroke-width="0.6"/><path d="M810.9 435.2 C814.2 435.2 824.2 435.4 830.9 435.5 C837.5 435.5 844.2 435.6 850.8 435.6 C857.5 435.6 864.2 435.6 870.8 435.5 C877.5 435.5 884.1 435.4 890.8 435.3 C897.5 435.1 904.1 434.9 910.8 434.8 C917.4 434.6 927.4 434.4 930.7 434.3" stroke-opacity="0.58" stroke-width="0.9"/><path d="M434.8 464.9 C436.5 464.9 441.9 464.7 445.4 464.7 C449.0 464.6 454.3 464.5 456.1 464.5" stroke-opacity="0.32" stroke-width="1.1"/><path d="M692.4 445.7 C695.8 445.8 705.9 446.0 712.6 446.1 C719.3 446.2 726.0 446.3 732.7 446.3 C739.4 446.4 746.1 446.4 752.8 446.4 C759.5 446.4 766.2 446.4 772.9 446.4 C779.7 446.3 786.4 446.2 793.1 446.2 C799.8 446.1 809.8 445.9 813.2 445.9" stroke-opacity="0.32" stroke-width="0.8"/><path d="M915.3 464.5 C917.0 464.7 922.1 465.0 925.6 465.2 C929.0 465.4 934.1 465.8 935.8 465.9" stroke-opacity="0.59" stroke-width="0.9"/><path d="M502.6 439.5 C505.7 439.5 515.3 439.3 521.6 439.2 C527.9 439.1 534.3 439.0 540.6 438.9 C547.0 438.8 556.5 438.7 559.6 438.6" stroke-opacity="0.44" stroke-width="0.5"/><path d="M688.5 474.2 C691.6 474.2 701.1 474.6 707.5 474.6 C713.8 474.7 723.3 474.5 726.5 474.5" stroke-opacity="0.43" stroke-width="0.9"/><path d="M422.9 447.9 C426.1 447.8 435.7 447.7 442.1 447.5 C448.5 447.4 454.8 447.2 461.2 447.1 C467.6 446.9 477.2 446.6 480.4 446.6" stroke-opacity="0.58" stroke-width="1.2"/><path d="M663.2 415.2 C664.5 415.2 668.6 415.1 671.4 415.0 C674.1 414.9 678.2 414.8 679.6 414.7" stroke-opacity="0.53" stroke-width="1.2"/><path d="M571.2 433.0 C572.8 433.0 577.7 432.9 580.9 432.9 C584.2 432.9 589.0 432.9 590.7 432.8" stroke-opacity="0.57" stroke-width="0.6"/><path d="M397.4 452.8 C399.1 452.8 404.0 452.7 407.3 452.6 C410.5 452.6 415.5 452.5 417.1 452.5" stroke-opacity="0.47" stroke-width="0.8"/><path d="M749.7 422.0 C751.0 422.0 754.9 422.0 757.5 422.0 C760.1 422.0 764.0 421.9 765.3 421.9" stroke-opacity="0.25" stroke-width="0.9"/><path d="M500.7 417.6 C503.8 417.5 513.1 417.3 519.4 417.1 C525.6 417.0 531.9 416.6 538.1 416.4 C544.4 416.2 553.7 415.9 556.9 415.8" stroke-opacity="0.35" stroke-width="0.8"/><path d="M478.2 435.9 C479.9 435.9 485.0 435.9 488.4 435.9 C491.7 435.9 496.8 435.9 498.5 435.8" stroke-opacity="0.46" stroke-width="0.9"/><path d="M744.9 463.5 C748.4 463.5 758.7 463.6 765.6 463.6 C772.5 463.7 779.4 463.8 786.3 463.8 C793.2 463.9 800.1 464.0 807.0 464.1 C813.9 464.2 820.8 464.3 827.6 464.4 C834.5 464.4 841.4 464.5 848.3 464.5 C855.2 464.4 865.6 464.4 869.0 464.3" stroke-opacity="0.50" stroke-width="1.1"/><path d="M570.4 463.3 C572.8 463.4 580.0 463.9 584.8 464.2 C589.6 464.6 596.8 465.0 599.2 465.1" stroke-opacity="0.29" stroke-width="1.3"/><path d="M463.0 460.7 C464.9 460.7 470.6 460.8 474.3 460.9 C478.1 460.9 483.7 461.0 485.6 461.0" stroke-opacity="0.30" stroke-width="0.6"/><path d="M632.8 459.6 C636.3 459.8 647.1 460.3 654.3 460.6 C661.5 461.0 668.6 461.3 675.8 461.7 C683.0 462.0 690.1 462.5 697.3 462.7 C704.5 462.8 711.7 462.7 718.8 462.7 C726.0 462.7 736.8 462.4 740.4 462.4" stroke-opacity="0.36" stroke-width="1.0"/><path d="M502.6 402.3 C506.0 402.2 516.5 402.0 523.5 401.7 C530.5 401.4 537.5 401.0 544.5 400.7 C551.5 400.4 558.4 400.1 565.4 399.8 C572.4 399.5 582.9 399.0 586.4 398.8" stroke-opacity="0.59" stroke-width="0.6"/><path d="M831.3 434.0 C834.2 434.1 842.8 434.3 848.6 434.4 C854.4 434.5 860.2 434.6 865.9 434.7 C871.7 434.7 880.3 434.8 883.2 434.8" stroke-opacity="0.28" stroke-width="0.6"/><path d="M406.1 406.3 C409.4 406.4 419.3 406.5 426.0 406.5 C432.6 406.6 439.2 406.6 445.9 406.7 C452.5 406.7 462.4 406.8 465.7 406.8" stroke-opacity="0.43" stroke-width="0.6"/><path d="M504.3 413.0 C507.6 413.0 517.6 413.2 524.3 413.2 C531.0 413.2 537.6 413.2 544.3 413.1 C550.9 413.1 557.6 413.0 564.3 412.9 C570.9 412.7 577.6 412.5 584.2 412.3 C590.9 412.0 597.6 411.7 604.2 411.4 C610.9 411.1 620.9 410.6 624.2 410.4" stroke-opacity="0.57" stroke-width="0.6"/><path d="M945.4 391.5 C947.9 391.4 955.3 391.2 960.3 391.2 C965.2 391.1 970.2 391.0 975.1 391.0 C980.1 391.1 987.5 391.2 990.0 391.3" stroke-opacity="0.33" stroke-width="0.9"/><path d="M637.7 434.7 C640.6 434.7 649.1 434.8 654.8 434.9 C660.5 434.9 666.2 435.0 671.8 435.1 C677.5 435.2 683.2 435.4 688.9 435.4 C694.6 435.5 703.1 435.5 705.9 435.6" stroke-opacity="0.48" stroke-width="1.2"/><path d="M651.8 408.8 C655.0 408.8 664.6 408.8 671.0 408.7 C677.4 408.7 683.8 408.6 690.2 408.5 C696.6 408.4 703.0 408.3 709.4 408.1 C715.8 408.0 722.2 407.8 728.6 407.6 C735.0 407.3 744.6 407.0 747.8 406.8" stroke-opacity="0.28" stroke-width="0.6"/><path d="M393.1 434.9 C396.3 435.0 405.8 435.3 412.2 435.4 C418.6 435.5 424.9 435.6 431.3 435.7 C437.7 435.8 444.0 435.8 450.4 435.8 C456.7 435.8 463.1 435.7 469.5 435.6 C475.8 435.6 482.2 435.4 488.6 435.4 C494.9 435.3 501.3 435.2 507.7 435.1 C514.0 435.0 523.6 434.9 526.8 434.9" stroke-opacity="0.48" stroke-width="1.2"/><path d="M622.7 444.7 C625.5 444.8 634.0 444.9 639.6 445.0 C645.3 445.0 651.0 445.1 656.6 445.1 C662.3 445.1 667.9 445.1 673.6 445.1 C679.3 445.1 687.8 445.1 690.6 445.1" stroke-opacity="0.59" stroke-width="1.1"/><path d="M921.7 410.2 C924.5 410.1 933.1 409.8 938.7 409.6 C944.4 409.5 950.1 409.3 955.8 409.2 C961.5 409.2 967.2 409.2 972.9 409.3 C978.6 409.4 987.2 409.6 990.0 409.7" stroke-opacity="0.53" stroke-width="0.8"/><path d="M903.1 468.2 C906.7 468.3 917.5 468.7 924.7 469.0 C931.9 469.3 939.1 469.7 946.3 470.1 C953.5 470.5 960.7 471.1 967.9 471.4 C975.1 471.8 985.9 472.0 989.5 472.2" stroke-opacity="0.51" stroke-width="0.8"/><path d="M425.6 449.1 C428.3 449.1 436.1 449.2 441.4 449.3 C446.6 449.4 454.5 449.5 457.1 449.5" stroke-opacity="0.20" stroke-width="0.8"/><path d="M752.2 446.0 C754.0 446.1 759.5 446.1 763.2 446.1 C766.9 446.1 772.4 446.1 774.3 446.1" stroke-opacity="0.47" stroke-width="0.8"/><path d="M720.0 448.0 C723.2 447.9 732.6 447.6 738.9 447.5 C745.2 447.3 751.5 447.1 757.8 446.9 C764.1 446.8 773.5 446.6 776.7 446.5" stroke-opacity="0.60" stroke-width="1.0"/><path d="M833.4 451.4 C836.7 451.4 846.5 451.6 853.0 451.6 C859.5 451.6 866.0 451.6 872.6 451.6 C879.1 451.6 885.6 451.5 892.1 451.5 C898.7 451.4 905.2 451.3 911.7 451.2 C918.2 451.1 924.8 451.0 931.3 450.9 C937.8 450.8 944.3 450.7 950.9 450.7 C957.4 450.6 963.9 450.7 970.4 450.8 C977.0 450.8 986.7 450.8 990.0 450.8" stroke-opacity="0.45" stroke-width="1.1"/><path d="M620.9 415.7 C622.1 415.6 625.7 415.4 628.1 415.2 C630.5 415.0 634.1 414.7 635.3 414.6" stroke-opacity="0.35" stroke-width="0.6"/><path d="M918.3 409.6 C921.6 409.5 931.5 409.2 938.1 409.1 C944.7 408.9 951.3 408.8 957.9 408.7 C964.5 408.6 974.4 408.8 977.7 408.8" stroke-opacity="0.59" stroke-width="1.0"/><path d="M760.4 476.9 C763.5 476.8 772.9 476.7 779.1 476.6 C785.4 476.5 791.6 476.3 797.9 476.2 C804.1 476.1 810.3 476.0 816.6 475.9 C822.8 475.9 829.1 475.8 835.3 475.7 C841.5 475.7 847.8 475.7 854.0 475.7 C860.3 475.7 869.6 475.7 872.7 475.7" stroke-opacity="0.44" stroke-width="1.1"/><path d="M932.8 391.4 C934.3 391.3 938.7 391.0 941.7 390.8 C944.7 390.6 949.1 390.3 950.6 390.2" stroke-opacity="0.27" stroke-width="0.9"/><path d="M418.5 442.2 C422.1 442.3 432.6 442.4 439.7 442.5 C446.7 442.5 453.8 442.5 460.8 442.5 C467.9 442.4 474.9 442.2 482.0 442.1 C489.0 442.0 496.1 441.8 503.1 441.6 C510.2 441.5 517.2 441.3 524.3 441.2 C531.3 441.2 538.4 441.1 545.4 441.0 C552.5 441.0 563.0 441.0 566.6 441.0" stroke-opacity="0.41" stroke-width="1.0"/><path d="M552.6 424.2 C555.9 424.2 565.7 424.2 572.2 424.2 C578.7 424.2 585.2 424.3 591.8 424.3 C598.3 424.3 604.8 424.3 611.4 424.3 C617.9 424.3 627.7 424.2 631.0 424.2" stroke-opacity="0.31" stroke-width="1.1"/><path d="M392.3 419.7 C394.2 419.6 399.9 419.5 403.8 419.4 C407.6 419.2 413.4 419.1 415.3 419.0" stroke-opacity="0.26" stroke-width="1.1"/><path d="M913.5 422.3 C916.7 422.3 926.3 422.0 932.7 421.8 C939.0 421.7 945.4 421.5 951.8 421.4 C958.1 421.3 964.5 421.4 970.9 421.4 C977.3 421.4 986.8 421.5 990.0 421.6" stroke-opacity="0.60" stroke-width="1.3"/><path d="M918.3 393.7 C921.7 393.6 932.2 393.2 939.1 392.9 C946.1 392.7 956.5 392.3 959.9 392.2" stroke-opacity="0.59" stroke-width="0.7"/><path d="M937.0 435.6 C939.9 435.5 948.8 435.5 954.7 435.5 C960.5 435.5 966.4 435.6 972.3 435.6 C978.2 435.6 987.1 435.4 990.0 435.4" stroke-opacity="0.59" stroke-width="1.2"/><path d="M451.9 442.0 C454.9 442.0 464.0 442.0 470.0 441.9 C476.1 441.9 482.1 441.8 488.1 441.7 C494.2 441.5 500.2 441.4 506.2 441.3 C512.3 441.2 521.3 441.0 524.4 440.9" stroke-opacity="0.28" stroke-width="0.5"/><path d="M457.4 436.5 C461.0 436.5 471.8 436.4 479.1 436.3 C486.3 436.2 497.2 436.0 500.8 436.0" stroke-opacity="0.38" stroke-width="0.7"/><path d="M631.5 441.1 C635.0 441.1 645.5 441.2 652.5 441.2 C659.5 441.2 666.5 441.2 673.4 441.2 C680.4 441.1 687.4 441.2 694.4 441.1 C701.4 441.1 708.4 440.9 715.4 440.8 C722.3 440.7 732.8 440.6 736.3 440.5" stroke-opacity="0.60" stroke-width="1.3"/><path d="M524.7 450.0 C526.0 450.1 530.0 450.4 532.6 450.6 C535.3 450.8 539.3 451.1 540.6 451.2" stroke-opacity="0.51" stroke-width="1.0"/><path d="M544.2 425.1 C547.7 425.0 558.3 424.9 565.3 424.7 C572.3 424.5 579.4 424.3 586.4 424.0 C593.4 423.8 600.5 423.5 607.5 423.3 C614.5 423.1 625.1 422.7 628.6 422.6" stroke-opacity="0.44" stroke-width="1.0"/><path d="M496.0 451.9 C497.9 451.9 503.8 452.0 507.6 452.2 C511.5 452.3 517.3 452.5 519.3 452.6" stroke-opacity="0.57" stroke-width="1.2"/><path d="M419.9 401.6 C421.9 401.7 428.2 402.0 432.4 402.1 C436.5 402.3 442.8 402.5 444.9 402.6" stroke-opacity="0.45" stroke-width="0.6"/><path d="M426.8 437.6 C428.0 437.6 431.8 437.7 434.3 437.8 C436.9 437.8 440.6 437.9 441.9 437.9" stroke-opacity="0.42" stroke-width="1.0"/><path d="M666.3 424.3 C668.1 424.2 673.2 424.1 676.7 424.0 C680.1 423.9 685.3 423.7 687.0 423.7" stroke-opacity="0.50" stroke-width="1.2"/><path d="M454.7 404.2 C457.8 404.3 467.1 404.4 473.4 404.6 C479.6 404.7 485.8 404.9 492.1 405.1 C498.3 405.3 504.5 405.7 510.8 405.8 C517.0 405.8 523.3 405.5 529.5 405.4 C535.7 405.3 542.0 405.2 548.2 405.1 C554.4 405.0 563.8 404.8 566.9 404.7" stroke-opacity="0.51" stroke-width="0.7"/><path d="M536.3 429.6 C539.4 429.6 548.7 429.5 555.0 429.5 C561.2 429.4 567.5 429.3 573.7 429.1 C580.0 429.0 586.2 428.8 592.5 428.7 C598.7 428.5 604.9 428.3 611.2 428.1 C617.4 427.9 623.7 427.7 629.9 427.6 C636.2 427.4 645.5 427.3 648.6 427.3" stroke-opacity="0.46" stroke-width="1.3"/><path d="M707.7 420.1 C710.9 420.1 720.7 420.2 727.2 420.2 C733.7 420.2 740.2 420.2 746.7 420.1 C753.2 420.1 759.7 420.0 766.2 419.9 C772.7 419.8 779.2 419.6 785.7 419.5 C792.2 419.3 801.9 419.1 805.2 419.0" stroke-opacity="0.37" stroke-width="0.8"/><path d="M900.4 397.2 C901.6 397.1 905.3 396.9 907.8 396.7 C910.3 396.5 914.0 396.2 915.3 396.1" stroke-opacity="0.43" stroke-width="0.9"/><path d="M560.3 446.3 C563.8 446.4 574.2 446.5 581.2 446.7 C588.1 446.9 595.1 447.1 602.0 447.4 C609.0 447.6 615.9 447.8 622.9 448.1 C629.8 448.3 636.8 448.6 643.7 448.8 C650.6 449.0 661.1 449.3 664.5 449.4" stroke-opacity="0.29" stroke-width="1.0"/><path d="M563.2 404.3 C566.3 404.2 575.6 404.0 581.8 403.8 C588.0 403.6 594.2 403.4 600.4 403.2 C606.6 403.0 612.8 402.8 619.0 402.6 C625.1 402.3 631.3 402.0 637.5 401.8 C643.7 401.6 653.0 401.4 656.1 401.4" stroke-opacity="0.31" stroke-width="0.6"/><path d="M812.3 421.7 C815.2 421.6 823.7 421.5 829.4 421.4 C835.1 421.2 843.6 421.0 846.5 420.9" stroke-opacity="0.48" stroke-width="1.0"/><path d="M938.6 471.3 C941.4 471.5 950.0 471.9 955.7 472.2 C961.4 472.5 967.1 472.9 972.9 473.2 C978.6 473.4 987.1 473.5 990.0 473.6" stroke-opacity="0.52" stroke-width="0.7"/><path d="M619.8 419.4 C623.2 419.3 633.6 419.0 640.5 419.0 C647.4 418.9 654.3 419.0 661.2 419.0 C668.1 419.1 675.0 419.2 681.9 419.3 C688.8 419.4 695.7 419.5 702.6 419.6 C709.5 419.7 716.5 419.7 723.4 419.7 C730.3 419.7 737.2 419.8 744.1 419.7 C751.0 419.7 761.3 419.6 764.8 419.5" stroke-opacity="0.30" stroke-width="0.8"/><path d="M598.4 423.3 C601.5 423.2 610.8 423.0 617.1 422.9 C623.3 422.8 632.7 422.8 635.8 422.7" stroke-opacity="0.28" stroke-width="1.0"/><path d="M702.9 460.2 C706.2 460.2 716.1 460.0 722.8 459.9 C729.4 459.7 736.0 459.6 742.6 459.4 C749.2 459.3 755.8 459.1 762.4 459.0 C769.0 458.8 775.6 458.7 782.2 458.6 C788.8 458.5 795.4 458.4 802.0 458.4 C808.6 458.5 818.6 458.7 821.9 458.7" stroke-opacity="0.27" stroke-width="1.1"/><path d="M550.1 459.9 C551.2 459.9 554.7 460.0 557.1 460.1 C559.4 460.2 563.0 460.4 564.1 460.4" stroke-opacity="0.42" stroke-width="1.0"/><path d="M768.2 473.4 C771.3 473.4 780.5 473.5 786.7 473.6 C792.9 473.7 799.1 473.7 805.2 473.8 C811.4 473.9 817.6 474.1 823.7 474.2 C829.9 474.3 836.1 474.4 842.2 474.4 C848.4 474.5 854.6 474.5 860.7 474.5 C866.9 474.5 876.2 474.4 879.2 474.4" stroke-opacity="0.42" stroke-width="1.1"/><path d="M432.2 404.4 C435.4 404.4 444.9 404.7 451.3 404.8 C457.7 405.0 464.0 405.2 470.4 405.4 C476.7 405.7 483.1 405.9 489.5 406.2 C495.8 406.4 502.2 406.9 508.6 407.0 C514.9 407.1 524.5 406.9 527.7 406.9" stroke-opacity="0.23" stroke-width="1.0"/><path d="M824.0 402.5 C827.2 402.3 836.9 402.0 843.3 401.8 C849.7 401.6 856.2 401.3 862.6 401.2 C869.0 401.0 875.5 400.9 881.9 400.7 C888.3 400.5 898.0 400.2 901.2 400.1" stroke-opacity="0.29" stroke-width="1.1"/><path d="M835.2 434.6 C838.3 434.6 847.6 434.4 853.8 434.4 C860.1 434.4 869.4 434.4 872.5 434.4" stroke-opacity="0.59" stroke-width="1.0"/><path d="M701.0 434.7 C704.1 434.7 713.3 434.6 719.4 434.5 C725.6 434.3 731.7 434.2 737.8 434.0 C743.9 433.9 750.1 433.7 756.2 433.5 C762.3 433.4 768.5 433.2 774.6 433.1 C780.7 432.9 789.9 432.7 793.0 432.7" stroke-opacity="0.57" stroke-width="0.8"/><path d="M777.4 461.0 C780.8 461.0 791.1 461.0 797.9 461.1 C804.8 461.2 811.6 461.4 818.5 461.6 C825.3 461.8 832.2 462.0 839.0 462.2 C845.9 462.5 852.7 462.7 859.6 462.9 C866.4 463.0 873.3 463.2 880.1 463.3 C886.9 463.5 897.2 463.6 900.6 463.7" stroke-opacity="0.53" stroke-width="1.2"/><path d="M761.8 472.4 C764.8 472.5 774.0 472.7 780.1 472.8 C786.3 472.9 792.4 473.0 798.5 473.2 C804.7 473.4 813.9 473.7 816.9 473.8" stroke-opacity="0.52" stroke-width="0.8"/><path d="M470.3 428.1 C473.5 428.1 483.1 428.3 489.5 428.4 C496.0 428.6 502.4 428.8 508.8 429.0 C515.2 429.1 521.7 429.2 528.1 429.3 C534.5 429.4 541.0 429.5 547.4 429.6 C553.8 429.7 563.5 429.8 566.7 429.8" stroke-opacity="0.35" stroke-width="0.6"/><path d="M634.7 410.2 C637.0 410.2 643.6 410.2 648.1 410.2 C652.6 410.2 659.3 410.3 661.5 410.3" stroke-opacity="0.22" stroke-width="0.7"/><path d="M766.3 401.4 C769.8 401.3 780.2 400.9 787.2 400.6 C794.1 400.3 801.1 400.0 808.0 399.7 C815.0 399.5 821.9 399.2 828.9 399.0 C835.8 398.8 842.8 398.6 849.8 398.4 C856.7 398.3 867.1 398.1 870.6 398.1" stroke-opacity="0.22" stroke-width="0.9"/><path d="M920.5 441.3 C921.7 441.3 925.2 441.1 927.6 441.0 C929.9 440.9 933.5 440.8 934.7 440.7" stroke-opacity="0.27" stroke-width="0.7"/><path d="M807.2 409.9 C810.0 409.9 818.4 409.9 823.9 409.9 C829.5 409.9 835.1 409.9 840.7 409.9 C846.3 409.9 851.9 410.0 857.5 410.0 C863.1 410.0 871.4 410.0 874.2 410.0" stroke-opacity="0.27" stroke-width="0.7"/><path d="M830.9 405.2 C833.3 405.2 840.5 405.3 845.2 405.3 C850.0 405.3 857.1 405.3 859.5 405.3" stroke-opacity="0.53" stroke-width="0.9"/><path d="M907.6 411.0 C911.0 410.9 921.3 410.4 928.2 410.1 C935.1 409.8 941.9 409.4 948.8 409.2 C955.7 409.0 962.5 408.9 969.4 408.8 C976.3 408.8 986.6 409.0 990.0 409.0" stroke-opacity="0.42" stroke-width="1.3"/><path d="M514.4 433.3 C515.6 433.4 519.2 433.6 521.6 433.8 C524.0 433.9 527.6 434.1 528.8 434.2" stroke-opacity="0.52" stroke-width="0.8"/><path d="M688.3 436.7 C690.4 436.8 696.8 437.2 701.0 437.4 C705.2 437.6 711.5 437.8 713.6 437.9" stroke-opacity="0.46" stroke-width="0.7"/><path d="M662.9 394.6 C665.8 394.6 674.4 394.6 680.2 394.6 C686.0 394.6 694.7 394.6 697.6 394.6" stroke-opacity="0.49" stroke-width="1.0"/><path d="M476.6 411.4 C479.0 411.4 486.4 411.3 491.3 411.3 C496.3 411.2 503.6 411.1 506.1 411.1" stroke-opacity="0.55" stroke-width="0.9"/><path d="M969.9 445.3 C971.6 445.3 976.6 445.3 980.0 445.3 C983.3 445.4 988.3 445.3 990.0 445.3" stroke-opacity="0.26" stroke-width="1.1"/><path d="M868.6 389.7 C872.0 389.6 882.1 389.5 888.9 389.1 C895.6 388.8 902.3 388.3 909.1 387.8 C915.8 387.4 922.6 387.1 929.3 386.6 C936.1 386.2 942.8 385.5 949.5 385.1 C956.3 384.8 963.0 384.5 969.8 384.4 C976.5 384.2 986.6 384.4 990.0 384.4" stroke-opacity="0.23" stroke-width="0.7"/><path d="M441.3 448.5 C444.0 448.4 452.1 448.4 457.5 448.4 C462.9 448.4 468.3 448.3 473.7 448.3 C479.1 448.3 487.2 448.4 489.9 448.4" stroke-opacity="0.58" stroke-width="1.0"/><path d="M563.1 459.6 C566.7 459.7 577.4 459.9 584.6 460.1 C591.8 460.2 598.9 460.4 606.1 460.6 C613.3 460.8 620.4 461.0 627.6 461.3 C634.8 461.5 641.9 461.7 649.1 462.0 C656.2 462.2 667.0 462.7 670.6 462.9" stroke-opacity="0.57" stroke-width="0.6"/><path d="M507.0 456.6 C510.2 456.6 519.9 456.6 526.4 456.7 C532.9 456.7 539.3 456.7 545.8 456.8 C552.3 456.8 562.0 456.8 565.2 456.8" stroke-opacity="0.26" stroke-width="1.2"/><path d="M567.3 420.0 C568.6 419.9 572.3 419.8 574.8 419.7 C577.3 419.5 581.0 419.4 582.2 419.3" stroke-opacity="0.39" stroke-width="1.1"/><path d="M789.4 420.9 C790.7 420.8 794.6 420.8 797.2 420.7 C799.8 420.7 803.8 420.7 805.1 420.7" stroke-opacity="0.38" stroke-width="1.3"/><path d="M769.8 461.6 C771.0 461.6 774.5 461.6 776.8 461.6 C779.2 461.6 782.7 461.6 783.8 461.6" stroke-opacity="0.48" stroke-width="0.7"/><path d="M654.3 439.0 C655.4 439.1 658.9 439.3 661.3 439.4 C663.6 439.5 667.1 439.7 668.3 439.8" stroke-opacity="0.52" stroke-width="0.7"/><path d="M555.3 442.8 C558.3 442.8 567.1 442.8 572.9 442.8 C578.8 442.8 587.6 442.8 590.5 442.8" stroke-opacity="0.32" stroke-width="0.8"/><path d="M777.3 424.8 C779.3 424.6 785.3 424.3 789.3 424.1 C793.3 423.9 799.2 423.6 801.2 423.5" stroke-opacity="0.49" stroke-width="0.8"/><path d="M716.1 472.7 C719.1 472.6 728.4 472.5 734.6 472.4 C740.7 472.2 746.9 472.1 753.1 471.9 C759.3 471.8 765.4 471.6 771.6 471.5 C777.8 471.3 783.9 471.2 790.1 471.1 C796.3 471.0 805.6 471.0 808.6 471.0" stroke-opacity="0.53" stroke-width="0.6"/><path d="M439.7 409.7 C443.1 409.8 453.5 410.0 460.4 410.1 C467.3 410.2 474.2 410.2 481.1 410.2 C488.0 410.3 495.0 410.4 501.9 410.3 C508.8 410.2 519.1 409.9 522.6 409.9" stroke-opacity="0.27" stroke-width="0.8"/><path d="M733.7 462.1 C735.0 462.1 738.8 461.9 741.3 461.9 C743.9 461.8 747.7 461.6 748.9 461.6" stroke-opacity="0.26" stroke-width="0.6"/><path d="M426.9 427.2 C430.2 427.2 440.3 427.1 447.0 427.1 C453.8 427.1 460.5 427.1 467.2 427.1 C473.9 427.1 480.6 427.2 487.4 427.2 C494.1 427.3 500.8 427.5 507.5 427.6 C514.2 427.7 521.0 427.7 527.7 427.7 C534.4 427.8 541.1 427.8 547.9 427.8 C554.6 427.9 564.7 427.9 568.0 427.9" stroke-opacity="0.40" stroke-width="1.0"/><path d="M868.5 456.5 C871.5 456.4 880.6 456.3 886.6 456.2 C892.7 456.2 901.8 456.3 904.8 456.3" stroke-opacity="0.36" stroke-width="0.5"/><path d="M796.9 425.0 C800.2 425.0 810.1 424.8 816.8 424.6 C823.4 424.5 830.0 424.4 836.6 424.3 C843.2 424.2 849.8 424.1 856.4 424.1 C863.0 424.1 869.6 424.1 876.2 424.1 C882.9 424.1 889.5 424.1 896.1 424.2 C902.7 424.2 909.3 424.2 915.9 424.2 C922.5 424.2 929.1 424.3 935.7 424.2 C942.3 424.2 952.3 424.2 955.6 424.2" stroke-opacity="0.46" stroke-width="1.0"/><path d="M579.3 398.6 C581.9 398.5 589.8 398.0 595.1 397.8 C600.3 397.5 608.2 397.1 610.9 397.0" stroke-opacity="0.24" stroke-width="0.8"/><path d="M849.2 434.2 C852.5 434.2 862.2 434.4 868.6 434.5 C875.1 434.6 881.5 434.8 888.0 434.8 C894.4 434.8 900.9 434.8 907.3 434.8 C913.8 434.7 920.2 434.6 926.7 434.5 C933.1 434.4 939.6 434.2 946.0 434.1 C952.5 433.9 962.2 433.8 965.4 433.7" stroke-opacity="0.26" stroke-width="1.1"/><path d="M707.5 468.3 C710.2 468.2 718.4 468.1 723.8 468.0 C729.2 467.9 737.4 467.8 740.1 467.7" stroke-opacity="0.26" stroke-width="1.1"/><path d="M688.5 474.5 C691.5 474.6 700.6 474.9 706.6 475.0 C712.7 475.1 718.7 475.0 724.8 475.1 C730.8 475.1 736.9 475.2 742.9 475.3 C749.0 475.4 755.0 475.5 761.1 475.7 C767.1 475.8 776.2 476.0 779.2 476.1" stroke-opacity="0.28" stroke-width="1.3"/><path d="M500.8 442.6 C502.0 442.6 505.8 442.6 508.3 442.5 C510.8 442.5 514.5 442.5 515.8 442.5" stroke-opacity="0.43" stroke-width="1.1"/><path d="M932.1 417.0 C934.9 417.0 943.3 416.8 948.9 416.8 C954.5 416.7 962.9 416.7 965.7 416.7" stroke-opacity="0.25" stroke-width="1.3"/><path d="M917.4 400.1 C920.6 400.0 930.3 399.8 936.8 399.5 C943.3 399.3 949.8 398.9 956.3 398.6 C962.7 398.4 972.5 398.1 975.7 398.0" stroke-opacity="0.42" stroke-width="0.7"/><path d="M969.4 472.3 C971.1 472.3 976.2 472.4 979.7 472.4 C983.1 472.4 988.3 472.3 990.0 472.3" stroke-opacity="0.25" stroke-width="1.2"/><path d="M913.2 414.3 C915.1 414.2 920.8 414.0 924.6 413.8 C928.4 413.7 934.0 413.4 935.9 413.3" stroke-opacity="0.53" stroke-width="0.6"/><path d="M429.0 437.5 C430.2 437.4 433.7 437.2 436.1 437.1 C438.4 437.0 442.0 436.8 443.2 436.8" stroke-opacity="0.59" stroke-width="1.3"/><path d="M565.5 445.9 C568.9 445.9 579.1 446.2 585.9 446.3 C592.7 446.4 599.5 446.5 606.3 446.6 C613.1 446.7 619.9 446.7 626.7 446.7 C633.5 446.8 643.7 446.9 647.1 446.9" stroke-opacity="0.35" stroke-width="1.0"/><path d="M393.6 454.7 C395.3 454.7 400.3 454.7 403.6 454.6 C407.0 454.6 412.0 454.6 413.6 454.6" stroke-opacity="0.26" stroke-width="0.8"/><path d="M486.5 439.6 C489.5 439.6 498.6 439.5 504.7 439.4 C510.7 439.4 516.8 439.3 522.8 439.2 C528.9 439.1 538.0 438.9 541.0 438.8" stroke-opacity="0.43" stroke-width="0.8"/><path d="M406.3 443.8 C409.7 443.9 419.9 444.1 426.7 444.2 C433.5 444.2 440.3 444.3 447.1 444.3 C453.9 444.3 460.7 444.3 467.5 444.2 C474.3 444.1 484.5 443.8 487.9 443.7" stroke-opacity="0.58" stroke-width="1.0"/><path d="M626.7 432.1 C629.8 432.2 638.8 432.3 644.8 432.4 C650.9 432.5 656.9 432.6 662.9 432.7 C669.0 432.7 675.0 432.7 681.0 432.7 C687.0 432.7 696.1 432.7 699.1 432.7" stroke-opacity="0.50" stroke-width="1.1"/><path d="M970.8 430.6 C972.4 430.7 977.2 430.8 980.4 430.9 C983.6 431.0 988.4 431.2 990.0 431.3" stroke-opacity="0.36" stroke-width="0.8"/><path d="M918.1 438.4 C921.2 438.4 930.4 438.3 936.6 438.3 C942.8 438.3 948.9 438.2 955.1 438.3 C961.3 438.4 970.5 438.7 973.6 438.8" stroke-opacity="0.37" stroke-width="1.2"/><path d="M416.3 420.5 C419.4 420.6 428.7 420.8 434.9 420.9 C441.1 421.1 447.3 421.3 453.4 421.5 C459.6 421.7 465.8 421.9 472.0 422.1 C478.2 422.3 484.4 422.5 490.6 422.7 C496.8 422.9 506.1 423.3 509.2 423.4" stroke-opacity="0.49" stroke-width="1.0"/><path d="M563.8 451.8 C566.6 451.8 574.9 451.8 580.5 451.8 C586.1 451.8 591.6 451.8 597.2 451.9 C602.8 451.9 608.4 452.0 613.9 452.1 C619.5 452.2 627.8 452.3 630.6 452.4" stroke-opacity="0.25" stroke-width="0.9"/><path d="M618.1 433.7 C619.3 433.7 622.9 433.9 625.3 434.0 C627.7 434.1 631.3 434.2 632.5 434.2" stroke-opacity="0.41" stroke-width="0.7"/><path d="M617.4 419.2 C619.2 419.2 624.8 419.0 628.5 418.8 C632.3 418.7 637.8 418.5 639.7 418.5" stroke-opacity="0.56" stroke-width="1.3"/><path d="M895.2 448.5 C898.6 448.5 908.8 448.5 915.5 448.5 C922.3 448.5 932.5 448.5 935.9 448.5" stroke-opacity="0.29" stroke-width="1.1"/><path d="M917.0 438.6 C918.3 438.6 922.2 438.7 924.7 438.7 C927.3 438.8 931.2 438.8 932.5 438.9" stroke-opacity="0.25" stroke-width="0.9"/><path d="M384.3 465.8 C386.3 465.7 392.0 465.5 395.8 465.4 C399.6 465.2 405.4 465.0 407.3 465.0" stroke-opacity="0.33" stroke-width="0.6"/><path d="M865.1 467.5 C868.3 467.5 877.7 467.5 883.9 467.6 C890.2 467.7 899.6 468.0 902.8 468.1" stroke-opacity="0.43" stroke-width="0.5"/><path d="M914.1 390.8 C916.5 390.7 923.5 390.5 928.2 390.3 C932.9 390.1 940.0 389.6 942.3 389.5" stroke-opacity="0.57" stroke-width="1.3"/><path d="M505.8 432.4 C508.1 432.4 514.9 432.4 519.4 432.4 C523.9 432.5 530.7 432.5 532.9 432.5" stroke-opacity="0.56" stroke-width="0.7"/><path d="M593.0 459.1 C595.6 459.2 603.5 459.6 608.8 459.9 C614.1 460.1 619.3 460.4 624.6 460.6 C629.9 460.8 637.8 461.0 640.4 461.1" stroke-opacity="0.55" stroke-width="1.3"/><path d="M757.1 408.1 C758.7 408.1 763.6 408.3 766.9 408.4 C770.1 408.5 775.0 408.6 776.6 408.7" stroke-opacity="0.22" stroke-width="0.6"/><path d="M568.7 450.7 C571.9 450.8 581.6 451.1 588.0 451.2 C594.5 451.4 600.9 451.5 607.4 451.6 C613.9 451.7 620.3 451.8 626.8 451.9 C633.2 452.0 639.7 452.0 646.1 452.1 C652.6 452.2 659.1 452.3 665.5 452.5 C672.0 452.6 678.4 452.8 684.9 453.0 C691.3 453.2 701.0 453.5 704.2 453.6" stroke-opacity="0.49" stroke-width="0.6"/><path d="M937.3 451.1 C940.9 451.1 951.9 451.3 959.2 451.4 C966.5 451.5 977.4 451.6 981.0 451.7" stroke-opacity="0.29" stroke-width="0.7"/><path d="M499.9 449.0 C501.5 448.9 506.2 448.7 509.4 448.6 C512.5 448.5 517.3 448.5 518.8 448.4" stroke-opacity="0.47" stroke-width="1.1"/><path d="M774.6 422.3 C778.2 422.2 789.2 421.9 796.5 421.8 C803.8 421.7 811.1 421.7 818.4 421.7 C825.7 421.7 833.0 421.8 840.3 421.9 C847.5 421.9 854.8 422.1 862.1 422.2 C869.4 422.3 876.7 422.4 884.0 422.5 C891.3 422.5 902.3 422.4 905.9 422.4" stroke-opacity="0.29" stroke-width="0.7"/><path d="M777.5 469.6 C779.7 469.6 786.0 469.7 790.3 469.8 C794.5 469.9 800.9 470.0 803.0 470.1" stroke-opacity="0.24" stroke-width="1.3"/><path d="M695.7 429.2 C698.8 429.1 708.2 428.7 714.5 428.5 C720.7 428.3 727.0 428.1 733.2 428.0 C739.5 427.8 748.8 427.6 752.0 427.6" stroke-opacity="0.44" stroke-width="0.7"/><path d="M857.9 411.6 C859.2 411.6 862.9 411.4 865.5 411.2 C868.0 411.1 871.8 410.9 873.0 410.9" stroke-opacity="0.50" stroke-width="0.7"/><path d="M707.4 415.7 C709.0 415.8 713.8 415.9 717.0 416.1 C720.2 416.2 725.0 416.3 726.6 416.4" stroke-opacity="0.60" stroke-width="0.5"/><path d="M826.8 429.5 C829.9 429.5 838.9 429.6 844.9 429.6 C851.0 429.7 860.0 429.9 863.0 430.0" stroke-opacity="0.40" stroke-width="0.6"/><path d="M764.5 438.5 C767.3 438.4 775.7 438.3 781.2 438.2 C786.8 438.1 795.1 437.9 797.9 437.9" stroke-opacity="0.51" stroke-width="0.9"/><path d="M882.8 434.5 C886.3 434.4 896.8 434.4 903.8 434.3 C910.9 434.3 917.9 434.1 924.9 434.0 C931.9 433.8 938.9 433.6 946.0 433.4 C953.0 433.2 963.5 433.1 967.0 433.0" stroke-opacity="0.58" stroke-width="0.6"/><path d="M481.5 452.6 C484.3 452.6 493.0 452.3 498.8 452.2 C504.6 452.0 510.4 452.0 516.2 452.0 C522.0 452.0 527.8 452.2 533.6 452.3 C539.3 452.4 548.0 452.7 550.9 452.7" stroke-opacity="0.38" stroke-width="1.1"/><path d="M850.8 459.0 C852.6 459.0 858.2 458.9 861.9 458.9 C865.7 458.9 871.3 458.8 873.1 458.8" stroke-opacity="0.29" stroke-width="1.0"/><path d="M404.8 433.2 C407.7 433.2 416.1 433.2 421.7 433.3 C427.3 433.3 432.9 433.4 438.6 433.4 C444.2 433.5 449.8 433.7 455.4 433.8 C461.0 433.9 469.5 434.0 472.3 434.1" stroke-opacity="0.43" stroke-width="1.2"/><path d="M473.6 412.7 C474.7 412.8 478.3 412.9 480.6 413.0 C482.9 413.0 486.4 413.1 487.6 413.2" stroke-opacity="0.37" stroke-width="0.9"/><path d="M855.1 412.0 C856.4 412.1 860.1 412.2 862.5 412.4 C865.0 412.5 868.7 412.7 869.9 412.7" stroke-opacity="0.43" stroke-width="0.9"/><path d="M524.4 453.4 C525.8 453.4 530.1 453.3 533.0 453.3 C535.9 453.2 540.2 453.2 541.6 453.2" stroke-opacity="0.22" stroke-width="0.8"/><path d="M694.0 444.7 C696.1 444.7 702.2 444.7 706.3 444.6 C710.4 444.5 716.5 444.4 718.5 444.4" stroke-opacity="0.24" stroke-width="1.2"/><path d="M534.4 411.7 C535.8 411.7 540.3 411.7 543.3 411.7 C546.2 411.7 550.7 411.8 552.2 411.8" stroke-opacity="0.53" stroke-width="1.1"/><path d="M626.3 399.7 C629.1 399.5 637.6 398.8 643.2 398.5 C648.9 398.1 657.4 397.7 660.2 397.6" stroke-opacity="0.59" stroke-width="0.5"/><path d="M833.1 432.1 C836.4 432.1 846.2 431.9 852.8 431.8 C859.3 431.7 865.8 431.6 872.4 431.6 C878.9 431.5 885.4 431.5 892.0 431.5 C898.5 431.5 905.0 431.5 911.6 431.5 C918.1 431.5 924.6 431.5 931.2 431.5 C937.7 431.6 944.3 431.5 950.8 431.6 C957.3 431.6 963.9 431.7 970.4 431.8 C976.9 431.8 986.7 431.8 990.0 431.8" stroke-opacity="0.38" stroke-width="1.1"/><path d="M526.0 403.5 C529.1 403.3 538.6 402.7 544.9 402.3 C551.3 401.9 557.6 401.5 563.9 401.1 C570.2 400.7 576.6 400.2 582.9 399.7 C589.2 399.3 595.5 398.8 601.9 398.4 C608.2 398.0 614.5 397.6 620.8 397.3 C627.2 397.0 633.5 396.7 639.8 396.6 C646.2 396.4 655.6 396.3 658.8 396.3" stroke-opacity="0.36" stroke-width="0.7"/><path d="M429.1 429.3 C430.3 429.3 433.9 429.6 436.2 429.8 C438.6 430.0 442.1 430.2 443.3 430.3" stroke-opacity="0.51" stroke-width="1.1"/><path d="M533.4 415.1 C536.7 415.0 546.7 414.7 553.3 414.6 C559.9 414.4 566.6 414.3 573.2 414.2 C579.8 414.0 589.8 413.8 593.1 413.7" stroke-opacity="0.38" stroke-width="1.2"/><path d="M582.9 424.7 C586.2 424.6 596.1 424.6 602.7 424.5 C609.3 424.4 615.9 424.3 622.5 424.2 C629.1 424.0 635.7 423.9 642.3 423.8 C648.9 423.6 655.5 423.5 662.1 423.4 C668.7 423.3 675.3 423.1 681.9 423.0 C688.5 422.9 695.1 422.8 701.7 422.7 C708.3 422.6 714.9 422.4 721.5 422.3 C728.1 422.2 738.0 422.1 741.3 422.1" stroke-opacity="0.22" stroke-width="0.8"/><path d="M418.5 444.1 C421.2 444.1 429.1 444.1 434.4 444.1 C439.6 444.1 447.6 444.1 450.2 444.1" stroke-opacity="0.55" stroke-width="1.0"/><path d="M656.9 464.7 C660.0 464.9 669.3 465.5 675.5 465.9 C681.7 466.3 691.0 466.9 694.1 467.2" stroke-opacity="0.35" stroke-width="1.1"/><path d="M589.0 412.6 C590.6 412.5 595.3 412.3 598.5 412.2 C601.7 412.1 606.4 411.9 608.0 411.8" stroke-opacity="0.27" stroke-width="0.7"/><path d="M659.9 411.5 C662.3 411.5 669.4 411.5 674.1 411.5 C678.8 411.4 685.9 411.3 688.2 411.3" stroke-opacity="0.60" stroke-width="1.0"/><path d="M504.7 458.0 C507.7 457.9 516.7 457.7 522.7 457.6 C528.7 457.5 537.7 457.6 540.7 457.6" stroke-opacity="0.48" stroke-width="0.8"/><path d="M395.0 418.2 C396.5 418.2 401.3 418.2 404.4 418.2 C407.6 418.1 412.3 418.1 413.9 418.0" stroke-opacity="0.36" stroke-width="1.2"/><path d="M542.5 449.2 C545.3 449.2 553.7 449.3 559.3 449.4 C564.9 449.4 573.2 449.5 576.0 449.6" stroke-opacity="0.57" stroke-width="0.8"/><path d="M810.8 456.9 C814.1 456.8 823.9 456.7 830.5 456.5 C837.0 456.4 843.6 456.3 850.1 456.2 C856.6 456.1 863.2 456.0 869.7 455.9 C876.3 455.9 882.8 455.8 889.4 455.8 C895.9 455.8 902.4 455.9 909.0 456.0 C915.5 456.1 922.1 456.2 928.6 456.3 C935.2 456.5 945.0 456.8 948.3 456.9" stroke-opacity="0.33" stroke-width="0.8"/><path d="M904.6 395.3 C907.1 395.3 914.6 395.2 919.5 395.2 C924.5 395.1 932.0 395.0 934.5 394.9" stroke-opacity="0.41" stroke-width="0.5"/><path d="M524.6 427.2 C525.8 427.1 529.3 426.8 531.7 426.7 C534.1 426.5 537.7 426.2 538.8 426.2" stroke-opacity="0.44" stroke-width="0.5"/><path d="M634.2 419.6 C637.4 419.6 647.2 419.6 653.7 419.5 C660.1 419.5 666.6 419.4 673.1 419.3 C679.6 419.1 689.3 418.9 692.6 418.8" stroke-opacity="0.48" stroke-width="0.7"/><path d="M777.0 452.5 C778.5 452.5 782.8 452.4 785.7 452.4 C788.5 452.3 792.9 452.2 794.3 452.2" stroke-opacity="0.31" stroke-width="1.1"/><path d="M612.0 427.4 C615.6 427.3 626.1 427.0 633.1 426.8 C640.1 426.6 647.2 426.5 654.2 426.4 C661.2 426.2 668.3 426.1 675.3 426.0 C682.3 425.8 689.3 425.8 696.4 425.7 C703.4 425.6 710.4 425.4 717.4 425.3 C724.5 425.2 735.0 425.2 738.5 425.1" stroke-opacity="0.32" stroke-width="0.8"/><path d="M408.0 413.2 C409.2 413.2 412.7 413.3 415.1 413.3 C417.4 413.4 420.9 413.5 422.1 413.5" stroke-opacity="0.43" stroke-width="1.1"/><path d="M559.9 467.7 C563.3 467.8 573.4 468.2 580.2 468.5 C587.0 468.8 593.8 469.1 600.6 469.5 C607.4 469.9 614.2 470.2 621.0 470.6 C627.7 471.0 637.9 471.7 641.3 471.9" stroke-opacity="0.29" stroke-width="1.1"/><path d="M947.5 449.1 C951.1 449.1 961.7 449.2 968.8 449.1 C975.8 449.0 986.5 448.8 990.0 448.7" stroke-opacity="0.45" stroke-width="0.6"/><path d="M615.5 428.4 C616.8 428.4 620.4 428.4 622.8 428.3 C625.2 428.3 628.9 428.3 630.1 428.3" stroke-opacity="0.33" stroke-width="0.9"/><path d="M477.6 419.1 C480.8 419.1 490.3 419.0 496.7 419.0 C503.1 418.9 512.7 418.9 515.9 418.8" stroke-opacity="0.27" stroke-width="1.0"/><path d="M438.9 415.8 C441.5 415.8 449.4 415.7 454.7 415.7 C459.9 415.7 467.8 415.7 470.4 415.7" stroke-opacity="0.26" stroke-width="1.0"/><path d="M710.4 451.0 C714.0 451.0 725.0 450.9 732.3 450.9 C739.6 450.9 746.9 451.0 754.2 451.0 C761.4 451.0 768.7 451.0 776.0 451.0 C783.3 450.9 794.3 450.8 797.9 450.7" stroke-opacity="0.36" stroke-width="0.8"/><path d="M622.6 399.6 C623.8 399.5 627.4 399.2 629.8 399.1 C632.2 398.9 635.8 398.8 637.0 398.7" stroke-opacity="0.43" stroke-width="0.9"/><path d="M533.5 422.6 C534.7 422.5 538.2 422.4 540.5 422.2 C542.9 422.1 546.4 421.9 547.6 421.9" stroke-opacity="0.56" stroke-width="1.0"/><path d="M778.2 412.7 C779.8 412.7 784.6 412.5 787.7 412.4 C790.9 412.3 795.7 412.2 797.3 412.2" stroke-opacity="0.45" stroke-width="1.3"/><path d="M723.9 422.4 C727.4 422.3 738.0 422.0 745.0 421.9 C752.0 421.7 759.0 421.6 766.0 421.5 C773.0 421.4 780.0 421.3 787.0 421.3 C794.0 421.3 801.1 421.3 808.1 421.4 C815.1 421.5 822.1 421.7 829.1 421.8 C836.1 421.9 843.1 422.0 850.1 422.1 C857.1 422.2 867.6 422.2 871.2 422.3" stroke-opacity="0.45" stroke-width="1.0"/><path d="M650 452 C690 436 760 428 850 425" stroke-opacity=".32" stroke-width="1"/><path d="M615 424 C640 412 700 408 760 410" stroke-opacity=".3" stroke-width="1"/><path d="M405 420 C470 428 540 430 640 440" stroke-opacity=".25" stroke-width="1"/><path d="M870 400 C910 404 950 410 985 416" stroke-opacity=".3" stroke-width="1"/><path d="M700 462 C780 458 860 462 960 470" stroke-opacity=".28" stroke-width="1"/></g><rect x="955" y="378" width="42" height="110" fill="url(#gWoodEnd)"/><rect x="380" y="390" width="12" height="86" fill="#8a4a1a" fill-opacity=".22"/><rect x="380" y="390" width="3" height="86" fill="#3a2a18" fill-opacity=".35"/></g><path d="M380 395.3 C386.7 395.5 407.0 396.0 420.0 396.4 C433.0 396.8 442.9 397.2 458.0 397.6 C473.1 398.0 492.5 399.2 510.8 399.0 C529.1 398.8 547.5 397.6 568.0 396.4 C588.5 395.2 612.0 393.1 634.0 392.0 C656.0 390.9 672.3 390.6 700.0 389.8 C727.7 389.1 768.7 388.1 800.0 387.5 C831.3 386.9 866.3 386.6 888.0 386.0 C909.7 385.4 919.0 384.5 930.0 383.8 C941.0 383.1 946.3 382.4 954.0 382.0 C961.7 381.6 972.3 381.2 976.0 381.1 C977.7 381.5 983.4 381.6 986.0 383.4 C988.6 385.2 990.2 387.6 991.6 392.0 C993.0 396.4 993.6 403.3 994.2 410.0 C994.8 416.7 995.0 424.5 995.0 432.0 C995.0 439.5 994.8 448.3 994.2 455.0 C993.6 461.7 993.0 467.6 991.6 472.0 C990.2 476.4 988.6 479.6 986.0 481.6 C983.4 483.7 977.7 483.9 976.0 484.3 C972.3 484.1 961.7 483.6 954.0 483.2 C946.3 482.8 941.0 482.4 930.0 482.0 C919.0 481.6 909.7 481.1 888.0 480.6 C866.3 480.2 831.3 479.5 800.0 479.3 C768.7 479.1 727.7 479.9 700.0 479.4 C672.3 478.8 656.0 477.3 634.0 476.0 C612.0 474.7 588.5 472.7 568.0 471.6 C547.5 470.5 529.1 469.6 510.8 469.5 C492.5 469.4 473.1 470.5 458.0 470.8 C442.9 471.1 433.0 471.3 420.0 471.4 C407.0 471.5 386.7 471.6 380.0 471.6 Z" fill="none" stroke="#8a5220" stroke-opacity=".55" stroke-width=".8"/><path d="M394.7 247.8 C390.9 249.2 379.9 253.0 372.2 256.1 C364.5 259.2 356.4 262.6 348.5 266.7 C340.6 270.8 332.7 275.6 324.8 280.9 C316.9 286.2 308.2 292.4 301.1 298.7 C294.0 305.0 287.6 312.2 282.1 318.9 C276.6 325.6 272.0 331.7 267.9 339.0 C263.8 346.3 260.3 354.0 257.3 362.7 C254.3 371.4 251.9 381.6 250.1 391.1 C248.3 400.6 247.4 411.5 246.6 419.6 C245.8 427.8 245.7 433.7 245.5 440.0 C245.3 446.3 245.2 452.1 245.5 457.4 C245.8 462.7 246.8 469.2 247.1 471.6 C248.6 474.0 253.4 480.3 256.1 485.8 C258.8 491.3 262.2 498.5 263.2 504.8 C264.2 511.1 263.4 517.4 262.0 523.7 C260.6 530.0 256.7 538.0 254.9 542.7 C253.1 547.5 251.9 550.6 251.3 552.2 C251.2 554.3 250.7 561.0 250.6 565.0 C250.5 569.0 250.6 571.3 250.9 575.9 C251.2 580.5 252.2 589.7 252.5 592.5 C252.9 593.2 253.6 596.0 255.0 597.0 C256.4 598.0 259.8 598.3 260.8 598.6 C265.5 598.8 278.5 600.2 289.2 600.0 C299.9 599.8 318.9 598.0 324.8 597.6 C325.9 597.3 329.9 596.9 331.5 596.0 C333.1 595.1 333.8 593.1 334.3 592.5 C334.7 589.7 336.4 582.2 336.6 575.9 C336.8 569.6 335.7 558.1 335.5 554.5 C334.9 553.1 332.5 547.7 331.9 546.3 C330.5 543.3 325.6 534.6 323.6 528.5 C321.6 522.4 320.0 515.4 320.0 509.5 C320.0 503.6 321.2 497.6 323.6 492.9 C326.0 488.2 329.4 484.2 334.3 481.1 C339.2 478.0 346.9 476.0 353.2 474.0 C359.5 472.0 367.8 470.6 372.2 469.2 C376.6 467.8 378.4 466.4 379.6 465.9 C379.8 453.8 380.4 405.6 380.6 393.5 C379.6 392.9 379.1 391.0 374.5 390.0 C369.9 389.0 360.7 388.6 353.2 387.6 C345.7 386.6 335.4 385.8 329.5 384.0 C323.6 382.2 320.3 380.4 317.7 376.9 C315.1 373.3 313.9 368.2 314.1 362.7 C314.3 357.2 316.3 350.0 318.9 343.7 C321.5 337.4 325.4 331.1 329.5 324.8 C333.6 318.5 338.2 311.7 343.7 305.8 C349.2 299.9 356.0 294.3 362.7 289.2 C369.4 284.1 377.8 278.6 384.0 275.0 C390.2 271.4 397.4 269.1 400.1 267.9 C400.2 266.2 401.1 260.9 401.0 258.0 C400.9 255.1 400.4 252.0 399.4 250.3 C398.3 248.6 395.5 248.2 394.7 247.8 Z" fill="#827f78"/><g clip-path="url(#headclip)"><g filter="url(#fB6)" fill="none" stroke-linecap="round"><path d="M336 386 L384 390 L384 474 L330 486 L318 470 L322 420 Z" fill="#73706a" stroke="none"/><path d="M392 256 C388.7 257.2 379.0 260.0 372.0 263.0 C365.0 266.0 357.3 269.7 350.0 274.0 C342.7 278.3 335.0 283.5 328.0 289.0 C321.0 294.5 314.0 300.5 308.0 307.0 C302.0 313.5 296.7 320.8 292.0 328.0 C287.3 335.2 283.5 342.2 280.0 350.0 C276.5 357.8 273.3 366.3 271.0 375.0 C268.7 383.7 267.0 391.8 266.0 402.0 C265.0 412.2 264.3 425.3 265.0 436.0 C265.7 446.7 266.7 456.7 270.0 466.0 C273.3 475.3 281.5 483.8 285.0 492.0 C288.5 500.2 290.3 506.2 291.0 515.0 C291.7 523.8 290.2 535.5 289.0 545.0 C287.8 554.5 284.8 562.8 284.0 572.0 C283.2 581.2 284.0 595.3 284.0 600.0" stroke="#b3b0a7" stroke-width="18"/><path d="M300 396 L336 404 L330 460 L296 462 Z" fill="#918e86" stroke="none"/><path d="M247.1 471.6 C248.6 474.0 253.4 480.3 256.1 485.8 C258.8 491.3 262.2 498.5 263.2 504.8 C264.2 511.1 263.4 517.4 262.0 523.7 C260.6 530.0 256.7 538.0 254.9 542.7 C253.1 547.5 251.9 550.6 251.3 552.2" stroke="#4f4d48" stroke-width="13"/><path d="M331.9 546.3 C330.5 543.3 325.6 534.6 323.6 528.5 C321.6 522.4 320.0 515.4 320.0 509.5 C320.0 503.6 321.2 497.6 323.6 492.9 C326.0 488.2 332.5 483.1 334.3 481.1" stroke="#4f4d48" stroke-width="15"/></g><g filter="url(#fB2)" fill="none"><path d="M394.7 247.8 C390.9 249.2 379.9 253.0 372.2 256.1 C364.5 259.2 356.4 262.6 348.5 266.7 C340.6 270.8 332.7 275.6 324.8 280.9 C316.9 286.2 308.2 292.4 301.1 298.7 C294.0 305.0 287.6 312.2 282.1 318.9 C276.6 325.6 272.0 331.7 267.9 339.0 C263.8 346.3 260.3 354.0 257.3 362.7 C254.3 371.4 251.9 381.6 250.1 391.1 C248.3 400.6 247.4 411.5 246.6 419.6 C245.8 427.8 245.7 433.7 245.5 440.0 C245.3 446.3 245.2 452.1 245.5 457.4 C245.8 462.7 246.8 469.2 247.1 471.6" stroke="#55534e" stroke-width="5"/><path d="M250 474 C268 486 278 500 277 522 C276 538 268 548 258 553" stroke="#5a5853" stroke-width="3.5"/><path d="M281 486 C288 500 288 528 280 549" stroke="#c4c2ba" stroke-opacity=".6" stroke-width="3"/><path d="M323.6 492.9 C325.4 490.9 329.4 484.2 334.3 481.1 C339.2 478.0 346.9 476.0 353.2 474.0 C359.5 472.0 367.8 470.6 372.2 469.2 C376.6 467.8 378.4 466.4 379.6 465.9" stroke="#44423e" stroke-width="9"/><path d="M247 470 C262 476 300 477 335 470" stroke="#5e5c57" stroke-opacity=".8" stroke-width="3"/></g><path d="M380.6 393.5 C379.6 392.9 379.1 391.0 374.5 390.0 C369.9 389.0 360.7 388.6 353.2 387.6 C345.7 386.6 335.4 385.8 329.5 384.0 C323.6 382.2 320.3 380.4 317.7 376.9 C315.1 373.3 313.9 368.2 314.1 362.7 C314.3 357.2 316.3 350.0 318.9 343.7 C321.5 337.4 325.4 331.1 329.5 324.8 C333.6 318.5 338.2 311.7 343.7 305.8 C349.2 299.9 356.0 294.3 362.7 289.2 C369.4 284.1 377.8 278.6 384.0 275.0 C390.2 271.4 397.4 269.1 400.1 267.9" stroke="#45433f" stroke-width="15" fill="none" stroke-opacity=".95"/><path d="M398 259 C395.0 260.5 386.7 264.2 380.0 268.0 C373.3 271.8 364.8 277.0 358.0 282.0 C351.2 287.0 344.7 292.2 339.0 298.0 C333.3 303.8 328.3 310.3 324.0 317.0 C319.7 323.7 315.8 331.2 313.0 338.0 C310.2 344.8 307.8 352.0 307.0 358.0 C306.2 364.0 306.2 369.5 308.0 374.0 C309.8 378.5 313.5 382.2 318.0 385.0 C322.5 387.8 328.0 389.3 335.0 391.0 C342.0 392.7 352.3 393.7 360.0 395.0 C367.7 396.3 377.5 398.3 381.0 399.0" stroke="#a09e97" stroke-width="1.6" fill="none" stroke-opacity=".9"/><path d="M380.6 393.5 C379.6 392.9 379.1 391.0 374.5 390.0 C369.9 389.0 360.7 388.6 353.2 387.6 C345.7 386.6 335.4 385.8 329.5 384.0 C323.6 382.2 320.3 380.4 317.7 376.9 C315.1 373.3 313.9 368.2 314.1 362.7 C314.3 357.2 316.3 350.0 318.9 343.7 C321.5 337.4 325.4 331.1 329.5 324.8 C333.6 318.5 338.2 311.7 343.7 305.8 C349.2 299.9 356.0 294.3 362.7 289.2 C369.4 284.1 377.8 278.6 384.0 275.0 C390.2 271.4 397.4 269.1 400.1 267.9" stroke="#2f2d2a" stroke-width="3" fill="none" stroke-opacity=".8"/><rect x="375" y="392" width="7" height="76" fill="#4a4843" fill-opacity=".7"/><path d="M246 549 C270 560 315 559 340 544 L340 604 L246 604 Z" fill="url(#gCyl)"/><path d="M246 549 C270 560 315 559 340 544 L340 604 L246 604 Z" fill="url(#gCylV)"/><path d="M250 551 C272 561 314 560 335 547" stroke="#3f3d39" stroke-opacity=".75" stroke-width="2" fill="none"/><path d="M251 555 C272 565 314 564 336 551" stroke="#b6b4ac" stroke-opacity=".55" stroke-width="1.6" fill="none"/><rect x="240" y="240" width="170" height="365" filter="url(#fMetal)" opacity=".3"/></g><path d="M394.7 247.8 C390.9 249.2 379.9 253.0 372.2 256.1 C364.5 259.2 356.4 262.6 348.5 266.7 C340.6 270.8 332.7 275.6 324.8 280.9 C316.9 286.2 308.2 292.4 301.1 298.7 C294.0 305.0 287.6 312.2 282.1 318.9 C276.6 325.6 272.0 331.7 267.9 339.0 C263.8 346.3 260.3 354.0 257.3 362.7 C254.3 371.4 251.9 381.6 250.1 391.1 C248.3 400.6 247.4 411.5 246.6 419.6 C245.8 427.8 245.7 433.7 245.5 440.0 C245.3 446.3 245.2 452.1 245.5 457.4 C245.8 462.7 246.8 469.2 247.1 471.6 C248.6 474.0 253.4 480.3 256.1 485.8 C258.8 491.3 262.2 498.5 263.2 504.8 C264.2 511.1 263.4 517.4 262.0 523.7 C260.6 530.0 256.7 538.0 254.9 542.7 C253.1 547.5 251.9 550.6 251.3 552.2 C251.2 554.3 250.7 561.0 250.6 565.0 C250.5 569.0 250.6 571.3 250.9 575.9 C251.2 580.5 252.2 589.7 252.5 592.5 C252.9 593.2 253.6 596.0 255.0 597.0 C256.4 598.0 259.8 598.3 260.8 598.6 C265.5 598.8 278.5 600.2 289.2 600.0 C299.9 599.8 318.9 598.0 324.8 597.6 C325.9 597.3 329.9 596.9 331.5 596.0 C333.1 595.1 333.8 593.1 334.3 592.5 C334.7 589.7 336.4 582.2 336.6 575.9 C336.8 569.6 335.7 558.1 335.5 554.5 C334.9 553.1 332.5 547.7 331.9 546.3 C330.5 543.3 325.6 534.6 323.6 528.5 C321.6 522.4 320.0 515.4 320.0 509.5 C320.0 503.6 321.2 497.6 323.6 492.9 C326.0 488.2 329.4 484.2 334.3 481.1 C339.2 478.0 346.9 476.0 353.2 474.0 C359.5 472.0 367.8 470.6 372.2 469.2 C376.6 467.8 378.4 466.4 379.6 465.9 C379.8 453.8 380.4 405.6 380.6 393.5 C379.6 392.9 379.1 391.0 374.5 390.0 C369.9 389.0 360.7 388.6 353.2 387.6 C345.7 386.6 335.4 385.8 329.5 384.0 C323.6 382.2 320.3 380.4 317.7 376.9 C315.1 373.3 313.9 368.2 314.1 362.7 C314.3 357.2 316.3 350.0 318.9 343.7 C321.5 337.4 325.4 331.1 329.5 324.8 C333.6 318.5 338.2 311.7 343.7 305.8 C349.2 299.9 356.0 294.3 362.7 289.2 C369.4 284.1 377.8 278.6 384.0 275.0 C390.2 271.4 397.4 269.1 400.1 267.9 C400.2 266.2 401.1 260.9 401.0 258.0 C400.9 255.1 400.4 252.0 399.4 250.3 C398.3 248.6 395.5 248.2 394.7 247.8 Z" fill="none" stroke="#3f3d39" stroke-opacity=".65" stroke-width="1"/><rect x="95" y="155" width="1024" height="577" fill="url(#grid)"/><rect x="245" y="155" width="1" height="577" fill="#c0c0c0" fill-opacity=".14"/><rect x="545" y="155" width="1" height="577" fill="#c0c0c0" fill-opacity=".14"/><rect x="845" y="155" width="1" height="577" fill="#c0c0c0" fill-opacity=".14"/><rect x="95" y="432" width="1024" height="1" fill="#c0c0c0" fill-opacity=".14"/><g stroke="#ff2a2a" stroke-opacity=".55" stroke-width="1" fill="none"><circle cx="245.3" cy="432.3" r="3.6"/><path d="M225.3 432.3 H265.3 M245.3 412.3 V452.3"/></g><rect x="191.4" y="240.6" width="10" height="10" fill="#0000a6" stroke="#3a3ad6" stroke-width="1"/><rect x="993.3" y="176.4" width="10" height="10" fill="#0000a6" stroke="#3a3ad6" stroke-width="1"/><rect x="1024.1" y="561.3" width="10" height="10" fill="#0000a6" stroke="#3a3ad6" stroke-width="1"/><rect x="221.9" y="625.5" width="10" height="10" fill="#0000a6" stroke="#3a3ad6" stroke-width="1"/></g></svg>
<!-- part_toolbar -->
<svg style="position:absolute;left:0px;top:0px;" width="1500" height="110" viewBox="0 0 1500 110"><defs><radialGradient id="gLens" cx=".5" cy=".35" r=".75"><stop offset="0" stop-color="#a9c6ee"/><stop offset=".55" stop-color="#6f9fde"/><stop offset="1" stop-color="#4e82c9"/></radialGradient><radialGradient id="gGlow" cx=".5" cy=".5" r=".5"><stop offset="0" stop-color="#fffde0"/><stop offset=".22" stop-color="#fbf06a"/><stop offset=".6" stop-color="#e9d90a" stop-opacity=".85"/><stop offset="1" stop-color="#e4d400" stop-opacity="0"/></radialGradient><linearGradient id="gPage" x1="0" y1="0" x2="1" y2="1"><stop offset="0" stop-color="#fdfdfd"/><stop offset="1" stop-color="#dcdcdc"/></linearGradient><linearGradient id="gFold" x1="0" y1="0" x2="0" y2="1"><stop offset="0" stop-color="#86a9d6"/><stop offset="1" stop-color="#5a86bf"/></linearGradient><linearGradient id="gFloppy" x1="0" y1="0" x2="1" y2="1"><stop offset="0" stop-color="#5f8cf2"/><stop offset=".5" stop-color="#3e6ee8"/><stop offset="1" stop-color="#2d55d0"/></linearGradient><linearGradient id="gLabel" x1="0" y1="0" x2="1" y2="1"><stop offset="0" stop-color="#e6ecfb"/><stop offset=".5" stop-color="#fdfdff"/><stop offset="1" stop-color="#d5def6"/></linearGradient><linearGradient id="gUndo" x1="0" y1="0" x2="1" y2="1"><stop offset="0" stop-color="#8ed286"/><stop offset=".5" stop-color="#45a84a"/><stop offset="1" stop-color="#17822a"/></linearGradient><linearGradient id="gPencil" x1="0" y1="0" x2="1" y2="1"><stop offset="0" stop-color="#f4b13c"/><stop offset="1" stop-color="#e07a10"/></linearGradient><linearGradient id="gRedPen" x1="0" y1="0" x2="1" y2="0"><stop offset="0" stop-color="#f0644a"/><stop offset=".5" stop-color="#d62718"/><stop offset="1" stop-color="#a5140c"/></linearGradient><linearGradient id="gClip" x1="0" y1="0" x2="0" y2="1"><stop offset="0" stop-color="#d59a4a"/><stop offset="1" stop-color="#b87a2a"/></linearGradient></defs><rect x="7" y="32" width="2" height="2" fill="#b2b2b2"/><rect x="7" y="38" width="2" height="2" fill="#b2b2b2"/><rect x="7" y="44" width="2" height="2" fill="#b2b2b2"/><rect x="7" y="50" width="2" height="2" fill="#b2b2b2"/><rect x="7" y="56" width="2" height="2" fill="#b2b2b2"/><rect x="12" y="25" width="43" height="43.5" rx="5" fill="#b9b9b9"/><path d="M27.2 35.8 L27.2 52.0 L30.9 48.5 L33.8 55.4 L36.8 54.1 L33.9 47.4 L38.6 46.7 Z" fill="#fff" stroke="#4a4a4a" stroke-width="1.1" stroke-linejoin="round"/><rect x="88" y="32" width="2" height="2" fill="#b2b2b2"/><rect x="88" y="38" width="2" height="2" fill="#b2b2b2"/><rect x="88" y="44" width="2" height="2" fill="#b2b2b2"/><rect x="88" y="50" width="2" height="2" fill="#b2b2b2"/><rect x="88" y="56" width="2" height="2" fill="#b2b2b2"/><rect x="101.5" y="33.2" width="24.4" height="27.4" rx="1.5" fill="#9a9a9a" fill-opacity=".55"/><rect x="101.2" y="32" width="24.2" height="27.2" rx="1.2" fill="url(#gPage)" stroke="#a9a9a9" stroke-width=".8"/><rect x="102.6" y="42" width="1" height="1" fill="#bbb"/><rect x="102.6" y="49.5" width="1" height="1" fill="#bbb"/><circle cx="121.7" cy="37.7" r="6.6" fill="url(#gGlow)"/><path d="M144.6 35.5 L150 35 L152 58 L148.5 58 Z" fill="#8d8d8d" stroke="#6f6f6f" stroke-width=".6"/><path d="M151.5 33 L172.2 32.2 L173.2 46 L150 52 Z" fill="#f4f4f4" stroke="#a5a5a5" stroke-width=".7"/><path d="M153.5 35.5 L171 34.8 M153.5 38 L171 37.3 M153.5 40.5 L171 39.8" stroke="#c4c4c4" stroke-width="1"/><path d="M149.5 34 L169 33.4 L170 47 L148.5 53 Z" fill="none"/><path d="M152 44.2 L176.2 43.6 L172.6 57.6 L146.4 57.9 Z" fill="url(#gFold)" stroke="#4d79b3" stroke-width=".8" stroke-linejoin="round"/><line x1="187.7" y1="26" x2="187.7" y2="66" stroke="#5a5a5a" stroke-width="1" stroke-dasharray="1 2"/><rect x="203.4" y="33.2" width="24.6" height="24.8" rx="3.2" fill="url(#gFloppy)" stroke="#2a2fb0" stroke-width="1"/><rect x="206.6" y="34.400000000000006" width="18.2" height="11.8" fill="url(#gLabel)"/><rect x="209.0" y="48.800000000000004" width="12.6" height="8.6" fill="#dfe1ea" stroke="#9aa2c8" stroke-width=".4"/><rect x="210.8" y="50.6" width="2.2" height="5" fill="#1c2fb0"/><rect x="225.0" y="35.2" width="1.3" height="1.6" fill="#cfdcff"/><rect x="249.4" y="33.2" width="24.6" height="24.8" rx="3.2" fill="url(#gFloppy)" stroke="#2a2fb0" stroke-width="1"/><rect x="252.6" y="34.400000000000006" width="18.2" height="11.8" fill="url(#gLabel)"/><rect x="255.0" y="48.800000000000004" width="12.6" height="8.6" fill="#dfe1ea" stroke="#9aa2c8" stroke-width=".4"/><rect x="256.8" y="50.6" width="2.2" height="5" fill="#1c2fb0"/><rect x="271.0" y="35.2" width="1.3" height="1.6" fill="#cfdcff"/><g transform="translate(259.3 50.2) rotate(-48)"><path d="M0 0 L5 -2.4 L5 2.4 Z" fill="#f3d9b0" stroke="#9a6a36" stroke-width=".4"/><path d="M0 0 L1.9 -0.9 L1.9 0.9 Z" fill="#333"/><rect x="5" y="-2.4" width="15.6" height="4.8" fill="url(#gPencil)" stroke="#b86410" stroke-width=".5"/><rect x="5" y="-0.7" width="15.6" height="1.4" fill="#ffd27a" fill-opacity=".8"/><rect x="20.6" y="-2.4" width="1.6" height="4.8" fill="#d8d8d8"/><rect x="22.2" y="-2.4" width="2.4" height="4.8" rx="1" fill="#e2432f"/></g><line x1="289.4" y1="26" x2="289.4" y2="66" stroke="#5a5a5a" stroke-width="1" stroke-dasharray="1 2"/><path d="M318 45 V37.4 M318 45 L312.6 39.8 M318 45 L323.4 39.8 M318 45 H309.4 M318 45 H326.6" stroke="#0b0b0b" stroke-width="5.6" stroke-linecap="round" fill="none"/><rect x="306.2" y="45.4" width="23.6" height="12.6" rx="2.6" fill="#0b0b0b"/><path d="M318 45 V37.4 M318 45 L312.6 39.8 M318 45 L323.4 39.8 M318 45 H309.4 M318 45 H326.6" stroke="#fbab2e" stroke-width="2.9" stroke-linecap="round" fill="none"/><text x="318.1" y="56.7" text-anchor="middle" font-family="Liberation Sans, sans-serif" font-weight="bold" font-size="12.4" fill="#fff" textLength="19.8" lengthAdjust="spacingAndGlyphs">SVG</text><line x1="345.4" y1="26" x2="345.4" y2="66" stroke="#5a5a5a" stroke-width="1" stroke-dasharray="1 2"/><rect x="369.6" y="31.8" width="14" height="14" fill="#ececec" stroke="#b5b5b5" stroke-width=".8"/><rect x="376" y="34" width="6" height="5" fill="#d4d4d4"/><path d="M361 47.2 L364.6 42.6 L384.4 42.6 L387.6 47.2 Z" fill="#dadada" stroke="#a9a9a9" stroke-width=".7"/><rect x="360.4" y="47.2" width="27.6" height="9.4" rx="1.6" fill="#e9e9e9" stroke="#a4a4a4" stroke-width=".8"/><rect x="360.8" y="54" width="26.8" height="3" rx="1.2" fill="#bdbdbd"/><rect x="364" y="49.4" width="20" height="1.2" fill="#9e9e9e"/><line x1="374" y1="45" x2="381.6" y2="51.4" stroke="#8e8e8e" stroke-width="2.6" stroke-linecap="round"/><circle cx="369.6" cy="40.4" r="5.6" fill="#a9c8f0" fill-opacity=".9" stroke="#4a78be" stroke-width="1.3"/><path d="M365.6 39 A4.2 4.2 0 0 1 373.4 38.6" stroke="#fff" stroke-opacity=".8" stroke-width="1.2" fill="none"/><rect x="403" y="32" width="2" height="2" fill="#b2b2b2"/><rect x="403" y="38" width="2" height="2" fill="#b2b2b2"/><rect x="403" y="44" width="2" height="2" fill="#b2b2b2"/><rect x="403" y="50" width="2" height="2" fill="#b2b2b2"/><rect x="403" y="56" width="2" height="2" fill="#b2b2b2"/><g transform="translate(414.2 34)" opacity="1.0"><path d="M0.8 3.2 L0.8 17.6 L14 17.6 L8.8 12.6 C10.8 9 13.8 7 17.3 7 C21.8 7 24.4 10 24.2 13.5 C24 18 18.8 21.8 12.8 22.8 L13.2 23.9 C21.8 23.6 29.4 18.6 29.4 11.4 C29.4 4.6 23.4 0.2 16.8 0.2 C12.2 0.2 8.2 2.6 5.4 7.8 Z" fill="url(#gUndo)" stroke="#1f7f2c" stroke-width=".8" stroke-linejoin="round"/><path d="M7.4 7.2 C10.4 3.2 14 1.6 18 1.8" stroke="#c4ecbc" stroke-opacity=".75" stroke-width="1.1" fill="none"/></g><g transform="translate(490.4 34) scale(-1 1)" opacity="0.42"><path d="M0.8 3.2 L0.8 17.6 L14 17.6 L8.8 12.6 C10.8 9 13.8 7 17.3 7 C21.8 7 24.4 10 24.2 13.5 C24 18 18.8 21.8 12.8 22.8 L13.2 23.9 C21.8 23.6 29.4 18.6 29.4 11.4 C29.4 4.6 23.4 0.2 16.8 0.2 C12.2 0.2 8.2 2.6 5.4 7.8 Z" fill="url(#gUndo)" stroke="#1f7f2c" stroke-width=".8" stroke-linejoin="round"/><path d="M7.4 7.2 C10.4 3.2 14 1.6 18 1.8" stroke="#c4ecbc" stroke-opacity=".75" stroke-width="1.1" fill="none"/></g><line x1="502.5" y1="26" x2="502.5" y2="66" stroke="#5a5a5a" stroke-width="1" stroke-dasharray="1 2"/><ellipse cx="531" cy="57.4" rx="12" ry="1.7" fill="#fff" fill-opacity=".7"/><ellipse cx="524" cy="57.2" rx="5" ry="1.2" fill="#8d8d8d" fill-opacity=".55"/><g transform="translate(518.6 52.4) rotate(-50)"><rect x="0" y="-1" width="27.6" height="9.6" rx="1.2" fill="#cf1a14" stroke="#9c0f0c" stroke-width=".6"/><rect x="0" y="-1" width="7" height="9.6" rx="1" fill="#f4f4f4" stroke="#b9b9b9" stroke-width=".5"/><rect x="7.6" y="2" width="18" height="2.6" fill="#fff" fill-opacity=".92"/><rect x="24.8" y="-1" width="2.8" height="9.6" rx="1" fill="#8f0d0a"/></g><line x1="558.4" y1="26" x2="558.4" y2="66" stroke="#5a5a5a" stroke-width="1" stroke-dasharray="1 2"/><path d="M589.6 31.4 L586.6 44.6 L589.6 46.4 L591.4 32 Z" fill="#f1f1f1" stroke="#6d6d6d" stroke-width=".8" stroke-linejoin="round"/><path d="M600.6 37.4 L588.6 44 L589.8 47 L601 40.8 Z" fill="#f1f1f1" stroke="#6d6d6d" stroke-width=".8" stroke-linejoin="round"/><ellipse cx="580" cy="48.2" rx="5.4" ry="3" transform="rotate(-24 580 48.2)" fill="none" stroke="#e01b24" stroke-width="2.1"/><ellipse cx="590.4" cy="54.4" rx="2.7" ry="5.2" transform="rotate(-8 590.4 54.4)" fill="none" stroke="#e01b24" stroke-width="2.1"/><path d="M584.6 45.6 L589 46.2 L588.6 49.6" stroke="#e01b24" stroke-width="2" fill="none"/><path d="M573.4 57.6 H579.6 M576.5 54.5 V60.7" stroke="#000" stroke-width="1.1"/><path d="M618.6 30.6 H639.0 V50.6 L634.4 55.2 H618.6 Z" fill="url(#gPage)" stroke="#a3a3a3" stroke-width=".8" stroke-linejoin="round"/><path d="M639.0 50.6 H634.4 V55.2 Z" fill="#bdbdbd" stroke="#a3a3a3" stroke-width=".5"/><rect x="623.0" y="37.4" width="11.399999999999999" height="1" fill="#c5c5c5"/><rect x="623.0" y="40.3" width="11.399999999999999" height="1" fill="#c5c5c5"/><rect x="623.0" y="43.2" width="11.399999999999999" height="1" fill="#c5c5c5"/><rect x="623.0" y="46.1" width="7.399999999999999" height="1" fill="#c5c5c5"/><path d="M626.6 36.4 H647.4 V56.4 L642.8 61.0 H626.6 Z" fill="url(#gPage)" stroke="#a3a3a3" stroke-width=".8" stroke-linejoin="round"/><path d="M647.4 56.4 H642.8 V61.0 Z" fill="#bdbdbd" stroke="#a3a3a3" stroke-width=".5"/><rect x="631.0" y="43.2" width="11.8" height="1" fill="#c5c5c5"/><rect x="631.0" y="46.1" width="11.8" height="1" fill="#c5c5c5"/><rect x="631.0" y="49.0" width="11.8" height="1" fill="#c5c5c5"/><rect x="631.0" y="51.9" width="7.800000000000001" height="1" fill="#c5c5c5"/><path d="M619.2 56.8 H625.2 M622.2 53.8 V59.8" stroke="#000" stroke-width="1.1"/><rect x="665.6" y="32.6" width="26.2" height="28" rx="1.6" fill="url(#gClip)" stroke="#9a6418" stroke-width=".9"/><path d="M668.6 35 H688.8 V53.6 L684.6 58 H668.6 Z" fill="url(#gPage)" stroke="#9f9f9f" stroke-width=".6"/><path d="M688.8 53.6 H684.6 V58 Z" fill="#9b9b9b"/><rect x="672.4" y="31.4" width="12.6" height="4.6" rx="1.2" fill="#9d9d93" stroke="#77776e" stroke-width=".6"/><rect x="675.6" y="30" width="6.2" height="2.4" rx="1" fill="#8b8b82"/><rect x="672" y="39.6" width="13" height="1" fill="#c1c1c1"/><rect x="672" y="42.6" width="13" height="1" fill="#c1c1c1"/><rect x="672" y="45.6" width="13" height="1" fill="#c1c1c1"/><rect x="672" y="48.6" width="9" height="1" fill="#c1c1c1"/><rect x="708" y="32" width="2" height="2" fill="#b2b2b2"/><rect x="708" y="38" width="2" height="2" fill="#b2b2b2"/><rect x="708" y="44" width="2" height="2" fill="#b2b2b2"/><rect x="708" y="50" width="2" height="2" fill="#b2b2b2"/><rect x="708" y="56" width="2" height="2" fill="#b2b2b2"/><g transform="translate(724.6 55) rotate(-47)"><path d="M0 0 L5.4 -3 L5.4 3 Z" fill="#f0d6ae" stroke="#9a6a36" stroke-width=".4"/><path d="M0 0 L2.2 -1.2 L2.2 1.2 Z" fill="#2b2b2b"/><rect x="5.4" y="-3" width="17" height="6" fill="url(#gRedPen)" stroke="#8e120b" stroke-width=".5" transform="rotate(0)"/><rect x="5.4" y="-1.2" width="17" height="1.6" fill="#ff8a70" fill-opacity=".7"/><rect x="22.4" y="-3" width="1.9" height="6" fill="#d9d9d9"/><path d="M24.3 -3 H26 A2.4 3 0 0 1 26 3 H24.3 Z" fill="#d62718" stroke="#8e120b" stroke-width=".4"/></g><rect x="723" y="55.9" width="22" height="1.2" fill="#f00"/><rect x="765.9" y="35.7" width="28.4" height="21.2" fill="#00007e" stroke="#15153a" stroke-width="1"/><path d="M769.6 53.6 L790.8 39.6 V53.6 Z" fill="none" stroke="#fff" stroke-width="1.3" stroke-dasharray="3.2 1.5"/><rect x="805.4" y="25" width="42.4" height="43.5" rx="5" fill="#b9b9b9"/><circle cx="825.8" cy="45.9" r="12.6" fill="none" stroke="#0a0a0a" stroke-width="1.7"/><line x1="812.2" y1="59.6" x2="840" y2="32" stroke="#1a1aff" stroke-width="1.1"/><line x1="854.3" y1="26" x2="854.3" y2="66" stroke="#5a5a5a" stroke-width="1" stroke-dasharray="1 2"/><rect x="862.2" y="25" width="42.8" height="43.5" rx="5" fill="#b9b9b9"/><rect x="869.9" y="33.0" width="2" height="2" fill="#0a0a0a"/><rect x="869.9" y="41.0" width="2" height="2" fill="#0a0a0a"/><rect x="869.9" y="49.1" width="2" height="2" fill="#0a0a0a"/><rect x="869.9" y="57.2" width="2" height="2" fill="#0a0a0a"/><rect x="877.9" y="33.0" width="2" height="2" fill="#0a0a0a"/><rect x="877.9" y="41.0" width="2" height="2" fill="#0a0a0a"/><rect x="877.9" y="49.1" width="2" height="2" fill="#0a0a0a"/><rect x="877.9" y="57.2" width="2" height="2" fill="#0a0a0a"/><rect x="886.0" y="33.0" width="2" height="2" fill="#0a0a0a"/><rect x="886.0" y="41.0" width="2" height="2" fill="#0a0a0a"/><rect x="886.0" y="49.1" width="2" height="2" fill="#0a0a0a"/><rect x="886.0" y="57.2" width="2" height="2" fill="#0a0a0a"/><rect x="894.0" y="33.0" width="2" height="2" fill="#0a0a0a"/><rect x="894.0" y="41.0" width="2" height="2" fill="#0a0a0a"/><rect x="894.0" y="49.1" width="2" height="2" fill="#0a0a0a"/><rect x="894.0" y="57.2" width="2" height="2" fill="#0a0a0a"/><line x1="911.5" y1="26" x2="911.5" y2="66" stroke="#5a5a5a" stroke-width="1" stroke-dasharray="1 2"/><line x1="944.0" y1="50.2" x2="952.5" y2="57.7" stroke="#5f5f5f" stroke-width="4.2" stroke-linecap="round"/><line x1="945.0" y1="50.800000000000004" x2="952.0" y2="57.0" stroke="#a2a2a2" stroke-width="1.3" stroke-linecap="round"/><circle cx="936" cy="42.2" r="10.6" fill="#e6e6e6" stroke="#9c9c9c" stroke-width="1.2"/><circle cx="936" cy="42.2" r="8.6" fill="url(#gLens)" stroke="#8fa9cc" stroke-width=".6"/><path d="M928.0 40.7 A8.2 8.2 0 0 1 944.0 40.7 Q936 43.7 928.0 40.7Z" fill="#fff" fill-opacity=".28"/><path d="M930.8 42.2 H941.2 M936 37.0 V47.400000000000006" stroke="#fff" stroke-width="2.7" stroke-linecap="round"/><line x1="990.0" y1="50.2" x2="998.5" y2="57.7" stroke="#5f5f5f" stroke-width="4.2" stroke-linecap="round"/><line x1="991.0" y1="50.800000000000004" x2="998.0" y2="57.0" stroke="#a2a2a2" stroke-width="1.3" stroke-linecap="round"/><circle cx="982" cy="42.2" r="10.6" fill="#e6e6e6" stroke="#9c9c9c" stroke-width="1.2"/><circle cx="982" cy="42.2" r="8.6" fill="url(#gLens)" stroke="#8fa9cc" stroke-width=".6"/><path d="M974.0 40.7 A8.2 8.2 0 0 1 990.0 40.7 Q982 43.7 974.0 40.7Z" fill="#fff" fill-opacity=".28"/><path d="M976.6 42.2 H987.4" stroke="#fff" stroke-width="2.7" stroke-linecap="round"/><line x1="1036.4" y1="50.2" x2="1044.9" y2="57.7" stroke="#5f5f5f" stroke-width="4.2" stroke-linecap="round"/><line x1="1037.4" y1="50.800000000000004" x2="1044.4" y2="57.0" stroke="#a2a2a2" stroke-width="1.3" stroke-linecap="round"/><circle cx="1028.4" cy="42.2" r="10.6" fill="#e6e6e6" stroke="#9c9c9c" stroke-width="1.2"/><circle cx="1028.4" cy="42.2" r="8.6" fill="url(#gLens)" stroke="#8fa9cc" stroke-width=".6"/><path d="M1020.4000000000001 40.7 A8.2 8.2 0 0 1 1036.4 40.7 Q1028.4 43.7 1020.4000000000001 40.7Z" fill="#fff" fill-opacity=".28"/><rect x="1025.2" y="39.0" width="6.4" height="6.4" fill="#c7dbf5" fill-opacity=".85"/><path d="M1023.0000000000001 40.00000000000001 V36.800000000000004 H1026.2 M1030.6000000000001 36.800000000000004 H1033.8000000000002 V40.00000000000001 M1033.8000000000002 44.4 V47.6 H1030.6000000000001 M1026.2 47.6 H1023.0000000000001 V44.4" stroke="#fff" stroke-width="2.1" fill="none"/><line x1="1082.4" y1="50.2" x2="1090.9" y2="57.7" stroke="#5f5f5f" stroke-width="4.2" stroke-linecap="round"/><line x1="1083.4" y1="50.800000000000004" x2="1090.4" y2="57.0" stroke="#a2a2a2" stroke-width="1.3" stroke-linecap="round"/><circle cx="1074.4" cy="42.2" r="10.6" fill="#e6e6e6" stroke="#9c9c9c" stroke-width="1.2"/><circle cx="1074.4" cy="42.2" r="8.6" fill="url(#gLens)" stroke="#8fa9cc" stroke-width=".6"/><path d="M1066.4 40.7 A8.2 8.2 0 0 1 1082.4 40.7 Q1074.4 43.7 1066.4 40.7Z" fill="#fff" fill-opacity=".28"/><rect x="1071.2" y="39.0" width="6.4" height="6.4" fill="#c7dbf5" fill-opacity=".85"/><path d="M1069.0 40.00000000000001 V36.800000000000004 H1072.2 M1076.6000000000001 36.800000000000004 H1079.8000000000002 V40.00000000000001 M1079.8000000000002 44.4 V47.6 H1076.6000000000001 M1072.2 47.6 H1069.0 V44.4" stroke="#ee1010" stroke-width="2.1" fill="none"/><line x1="1128.4" y1="50.2" x2="1136.9" y2="57.7" stroke="#5f5f5f" stroke-width="4.2" stroke-linecap="round"/><line x1="1129.4" y1="50.800000000000004" x2="1136.4" y2="57.0" stroke="#a2a2a2" stroke-width="1.3" stroke-linecap="round"/><circle cx="1120.4" cy="42.2" r="10.6" fill="#e6e6e6" stroke="#9c9c9c" stroke-width="1.2"/><circle cx="1120.4" cy="42.2" r="8.6" fill="url(#gLens)" stroke="#8fa9cc" stroke-width=".6"/><path d="M1112.4 40.7 A8.2 8.2 0 0 1 1128.4 40.7 Q1120.4 43.7 1112.4 40.7Z" fill="#fff" fill-opacity=".28"/><path d="M1113.8000000000002 42.2 L1119.8000000000002 36.800000000000004 V40.0 H1126.8000000000002 V44.400000000000006 H1119.8000000000002 V47.6 Z" fill="#fff" stroke="#d9e6f8" stroke-width=".4"/><rect x="1154.6" y="30.8" width="27" height="17.4" rx="1.2" fill="#fbfcff" stroke="#86a6dd" stroke-width=".9"/><line x1="1175.2800000000002" y1="51.68" x2="1182.5900000000001" y2="58.129999999999995" stroke="#5f5f5f" stroke-width="3.6" stroke-linecap="round"/><line x1="1176.14" y1="52.196" x2="1182.16" y2="57.528" stroke="#a2a2a2" stroke-width="1.3" stroke-linecap="round"/><circle cx="1168.4" cy="44.8" r="9.1" fill="#e6e6e6" stroke="#9c9c9c" stroke-width="1.2"/><circle cx="1168.4" cy="44.8" r="7.4" fill="url(#gLens)" stroke="#8fa9cc" stroke-width=".6"/><path d="M1161.52 43.3 A7.1 7.1 0 0 1 1175.2800000000002 43.3 Q1168.4 46.3 1161.52 43.3Z" fill="#fff" fill-opacity=".28"/><path d="M1161.2 46.4 Q1168.4 43.6 1175.6 46.4 A7.4 7.4 0 0 1 1161.2 46.4Z" fill="#5e90d6" fill-opacity=".55"/><line x1="1221.4" y1="50.2" x2="1229.9" y2="57.7" stroke="#5f5f5f" stroke-width="4.2" stroke-linecap="round"/><line x1="1222.4" y1="50.800000000000004" x2="1229.4" y2="57.0" stroke="#a2a2a2" stroke-width="1.3" stroke-linecap="round"/><circle cx="1213.4" cy="42.2" r="10.6" fill="#e6e6e6" stroke="#9c9c9c" stroke-width="1.2"/><circle cx="1213.4" cy="42.2" r="8.6" fill="url(#gLens)" stroke="#8fa9cc" stroke-width=".6"/><path d="M1205.4 40.7 A8.2 8.2 0 0 1 1221.4 40.7 Q1213.4 43.7 1205.4 40.7Z" fill="#fff" fill-opacity=".28"/><g fill="#fff" stroke="#5e8fd8" stroke-width=".7" stroke-linejoin="round"><path d="M1213.4 29.6 L1217.0 34.800000000000004 H1214.7 V40.900000000000006 H1220.8000000000002 V38.6 L1226.0 42.2 L1220.8000000000002 45.800000000000004 V43.5 H1214.7 V49.6 H1217.0 L1213.4 54.800000000000004 L1209.8000000000002 49.6 H1212.1000000000001 V43.5 H1206.0 V45.800000000000004 L1200.8000000000002 42.2 L1206.0 38.6 V40.900000000000006 H1212.1000000000001 V34.800000000000004 H1209.8000000000002 Z"/></g><rect x="7" y="77" width="2" height="2" fill="#b2b2b2"/><rect x="7" y="83" width="2" height="2" fill="#b2b2b2"/><rect x="7" y="89" width="2" height="2" fill="#b2b2b2"/><rect x="7" y="95" width="2" height="2" fill="#b2b2b2"/><defs><linearGradient id="gBtn2" x1="0" y1="0" x2="0" y2="1"><stop offset="0" stop-color="#f7f7f7"/><stop offset=".5" stop-color="#e6e6e6"/><stop offset="1" stop-color="#f1f1f1"/></linearGradient></defs><rect x="14.8" y="72.8" width="43.2" height="31.2" rx="5.6" fill="url(#gBtn2)" stroke="#8e8e8e" stroke-width="1.7"/><path d="M31.1 79.2 L31.1 93.6 L34.4 90.5 L37.0 96.6 L39.6 95.5 L37.1 89.5 L41.2 88.9 Z" fill="#fff" stroke="#4a4a4a" stroke-width="1.1" stroke-linejoin="round"/><line x1="67.5" y1="71" x2="67.5" y2="105" stroke="#5a5a5a" stroke-width="1" stroke-dasharray="1 2"/></svg>
<!-- part_tools -->
<svg style="position:absolute;left:0px;top:0px;" width="72" height="500" viewBox="0 0 72 500"><defs><linearGradient id="gTool" x1="0" y1="0" x2="0" y2="1"><stop offset="0" stop-color="#e3e3e3"/><stop offset=".22" stop-color="#f0f0f0"/><stop offset=".55" stop-color="#f7f7f7"/><stop offset="1" stop-color="#efefef"/></linearGradient><pattern id="hatch" width="2.2" height="2.2" patternUnits="userSpaceOnUse" patternTransform="rotate(-45)"><rect width="2.2" height="2.2" fill="#f4f4f4"/><rect width="2.2" height=".8" fill="#333"/></pattern></defs><rect x="6.8" y="116" width="2" height="2" fill="#b3b3b3"/><rect x="12.8" y="116" width="2" height="2" fill="#b3b3b3"/><rect x="18.9" y="116" width="2" height="2" fill="#b3b3b3"/><rect x="24.9" y="116" width="2" height="2" fill="#b3b3b3"/><rect x="30.9" y="116" width="2" height="2" fill="#b3b3b3"/><rect x="37.0" y="116" width="2" height="2" fill="#b3b3b3"/><rect x="43.0" y="116" width="2" height="2" fill="#b3b3b3"/><rect x="49.0" y="116" width="2" height="2" fill="#b3b3b3"/><rect x="55.0" y="116" width="2" height="2" fill="#b3b3b3"/><rect x="61.1" y="116" width="2" height="2" fill="#b3b3b3"/><rect x="1.4" y="122.5" width="34.4" height="34.2" fill="url(#gTool)" stroke="#a3a3a3" stroke-width="1.1"/><path d="M8.2 131.1 H14.600000000000001 M11.4 127.89999999999999 V134.29999999999998" stroke="#1b1b1b" stroke-width="1.2"/><path d="M22.2 140.5 H28.599999999999998 M25.4 137.3 V143.7" stroke="#1b1b1b" stroke-width="1.2"/><path d="M8.600000000000001 146.9 H15.0 M11.8 143.70000000000002 V150.1" stroke="#1b1b1b" stroke-width="1.2"/><path d="M32.0 148.1 V153.1 H27.0 Z" fill="#0a0a0a"/><rect x="36.2" y="122.5" width="34.4" height="34.2" fill="url(#gTool)" stroke="#a3a3a3" stroke-width="1.1"/><path d="M41.800000000000004 144.9 L64.80000000000001 134.1" fill="none" stroke="#1b1b1b" stroke-width="1.25" stroke-linecap="round" stroke-linejoin="round" /><path d="M66.80000000000001 148.1 V153.1 H61.800000000000004 Z" fill="#0a0a0a"/><rect x="1.4" y="157.6" width="34.4" height="34.2" fill="url(#gTool)" stroke="#a3a3a3" stroke-width="1.1"/><path d="M7.6 183.6 C8.8 172.6 16.4 165.2 27.599999999999998 164.0" fill="none" stroke="#1b1b1b" stroke-width="1.4" stroke-linecap="round" stroke-linejoin="round" /><path d="M32.0 183.2 V188.2 H27.0 Z" fill="#0a0a0a"/><rect x="36.2" y="157.6" width="34.4" height="34.2" fill="url(#gTool)" stroke="#a3a3a3" stroke-width="1.1"/><circle cx="52.400000000000006" cy="173.4" r="9.9" fill="none" stroke="#1b1b1b" stroke-width="1.25"/><path d="M66.80000000000001 183.2 V188.2 H61.800000000000004 Z" fill="#0a0a0a"/><rect x="1.4" y="192.7" width="34.4" height="34.2" fill="url(#gTool)" stroke="#a3a3a3" stroke-width="1.1"/><ellipse cx="17.799999999999997" cy="209.1" rx="13.4" ry="6.4" transform="rotate(-43 17.799999999999997 209.1)" fill="none" stroke="#1b1b1b" stroke-width="1.25"/><path d="M32.0 218.29999999999998 V223.29999999999998 H27.0 Z" fill="#0a0a0a"/><rect x="36.2" y="192.7" width="34.4" height="34.2" fill="url(#gTool)" stroke="#a3a3a3" stroke-width="1.1"/><path d="M41.800000000000004 202.29999999999998 C38.800000000000004 210.7 44.2 221.29999999999998 49.2 218.29999999999998 C55.2 214.7 56.6 200.7 61.800000000000004 200.29999999999998 C66.2 200.1 65.80000000000001 212.29999999999998 61.800000000000004 212.29999999999998 C55.800000000000004 212.29999999999998 48.2 198.1 41.800000000000004 202.29999999999998" fill="none" stroke="#1b1b1b" stroke-width="1.25" stroke-linecap="round" stroke-linejoin="round" /><path d="M66.80000000000001 218.29999999999998 V223.29999999999998 H61.800000000000004 Z" fill="#0a0a0a"/><rect x="1.4" y="227.8" width="34.4" height="34.2" fill="url(#gTool)" stroke="#a3a3a3" stroke-width="1.1"/><path d="M14.0 237.4 C6.800000000000001 238.20000000000002 6.800000000000001 248.20000000000002 14.0 248.20000000000002 L27.799999999999997 248.20000000000002" fill="none" stroke="#1b1b1b" stroke-width="1.3" stroke-linecap="round" stroke-linejoin="round" /><path d="M32.0 253.4 V258.40000000000003 H27.0 Z" fill="#0a0a0a"/><rect x="36.2" y="227.8" width="34.4" height="34.2" fill="url(#gTool)" stroke="#a3a3a3" stroke-width="1.1"/><path d="M39.800000000000004 239.4 L43.6 233.20000000000002 L50.800000000000004 233.20000000000002 L54.400000000000006 239.4 L50.800000000000004 245.60000000000002 L43.6 245.60000000000002 Z" fill="none" stroke="#1b1b1b" stroke-width="1.15" stroke-linecap="round" stroke-linejoin="round" /><path d="M55.800000000000004 246.4 L60.6 237.8 L65.6 246.4 Z" fill="none" stroke="#1b1b1b" stroke-width="1.15" stroke-linecap="round" stroke-linejoin="round" /><rect x="40.800000000000004" y="249.8" width="14.6" height="6.8" fill="none" stroke="#1b1b1b" stroke-width="1.15"/><path d="M66.80000000000001 253.4 V258.40000000000003 H61.800000000000004 Z" fill="#0a0a0a"/><rect x="1.4" y="262.8" width="34.4" height="34.2" fill="url(#gTool)" stroke="#a3a3a3" stroke-width="1.1"/><path d="M7.800000000000001 281.8 L14.0 273.0 H28.799999999999997 V287.40000000000003 H7.800000000000001 Z" fill="url(#hatch)" stroke="#1b1b1b" stroke-width="1.2" stroke-linejoin="round"/><circle cx="21.0" cy="280.40000000000003" r="3.1" fill="#f4f4f4" stroke="#1b1b1b" stroke-width="1.1"/><path d="M32.0 288.40000000000003 V293.40000000000003 H27.0 Z" fill="#0a0a0a"/><rect x="1.4" y="305.6" width="34.4" height="34.2" fill="url(#gTool)" stroke="#a3a3a3" stroke-width="1.1"/><text x="18.799999999999997" y="332.20000000000005" text-anchor="middle" font-family="Liberation Serif, serif" font-size="29.5" fill="#0c0c0c">A</text><rect x="36.2" y="305.6" width="34.4" height="34.2" fill="url(#gTool)" stroke="#a3a3a3" stroke-width="1.1"/><path d="M42.6 313.20000000000005 V330.20000000000005 M60.800000000000004 313.20000000000005 V330.20000000000005 M42.6 316.20000000000005 H60.800000000000004" fill="none" stroke="#1b1b1b" stroke-width="1.2" stroke-linecap="round" stroke-linejoin="round" /><path d="M42.800000000000004 316.20000000000005 l4.4 -2 v4 Z M60.6 316.20000000000005 l-4.4 -2 v4 Z" fill="#1b1b1b"/><path d="M66.80000000000001 330.20000000000005 V334.40000000000003 H62.6 Z" fill="#0a0a0a"/><rect x="1.4" y="340.7" width="34.4" height="34.2" fill="url(#gTool)" stroke="#a3a3a3" stroke-width="1.1"/><rect x="6.800000000000001" y="348.9" width="22" height="16.6" fill="#fdfdfd" stroke="#1b1b1b" stroke-width="1.3"/><path d="M9.8 362.7 V360.3 L14.200000000000001 356.09999999999997 L17.2 358.7 L21.2 354.3 L25.799999999999997 359.7 V362.7 Z" fill="#050505"/><circle cx="24.2" cy="352.5" r="1.6" fill="#050505"/><rect x="1.4" y="383.6" width="34.4" height="34.2" fill="url(#gTool)" stroke="#a3a3a3" stroke-width="1.1"/><path d="M5.199999999999999 394.20000000000005 V414.20000000000005 H25.0 Z M9.6 404.20000000000005 V410.20000000000005 H15.8 Z" fill="none" stroke="#1b1b1b" stroke-width="1.15" stroke-linecap="round" stroke-linejoin="round" /><g transform="translate(21.0 397.8) rotate(-130)"><path d="M0 0 L3.4 -1.9 V1.9 Z" fill="#e9c89c" stroke="#a06a30" stroke-width=".3"/><rect x="3.4" y="-1.9" width="9.4" height="3.8" fill="#d92a1c" stroke="#8e120b" stroke-width=".4"/><rect x="12.8" y="-1.9" width="1.3" height="3.8" fill="#ddd"/><rect x="14.1" y="-1.9" width="1.8" height="3.8" rx=".8" fill="#d92a1c"/></g><path d="M27.599999999999998 389.0 V392.0 M27.599999999999998 392.0 L25.0 406.0 M27.599999999999998 392.0 L30.4 406.0" fill="none" stroke="#1b1b1b" stroke-width="1.0" stroke-linecap="round" stroke-linejoin="round" /><circle cx="27.599999999999998" cy="392.20000000000005" r="1.3" fill="#1b1b1b"/><path d="M32.0 409.6 V413.8 H27.799999999999997 Z" fill="#0a0a0a"/><rect x="36.2" y="383.6" width="34.4" height="34.2" fill="url(#gTool)" stroke="#a3a3a3" stroke-width="1.1"/><rect x="40.6" y="397.20000000000005" width="24.4" height="7.4" rx="1" fill="#fbfbfb" stroke="#555" stroke-width="1"/><rect x="42.40" y="397.6" width=".8" height="3.2" fill="#444"/><rect x="44.46" y="397.6" width=".8" height="1.9" fill="#444"/><rect x="46.52" y="397.6" width=".8" height="1.9" fill="#444"/><rect x="48.58" y="397.6" width=".8" height="1.9" fill="#444"/><rect x="50.64" y="397.6" width=".8" height="1.9" fill="#444"/><rect x="52.70" y="397.6" width=".8" height="3.2" fill="#444"/><rect x="54.76" y="397.6" width=".8" height="1.9" fill="#444"/><rect x="56.82" y="397.6" width=".8" height="1.9" fill="#444"/><rect x="58.88" y="397.6" width=".8" height="1.9" fill="#444"/><rect x="60.94" y="397.6" width=".8" height="1.9" fill="#444"/><rect x="63.00" y="397.6" width=".8" height="3.2" fill="#444"/><rect x="1.4" y="418.7" width="34.4" height="34.2" fill="url(#gTool)" stroke="#a3a3a3" stroke-width="1.1"/><rect x="6.800000000000001" y="425.5" width="17.4" height="12.6" fill="#fdf3c8" stroke="#1b1b1b" stroke-width="1.1"/><circle cx="23.2" cy="437.3" r="6.8" fill="#fdf3c8" stroke="#1b1b1b" stroke-width="1.1"/><path d="M16.599999999999998 438.09999999999997 H24.2 V430.5" fill="none" stroke="#1b1b1b" stroke-width="1.1"/><circle cx="7.0" cy="438.09999999999997" r="1.5" fill="#f33"/><rect x="36.2" y="418.7" width="34.4" height="34.2" fill="url(#gTool)" stroke="#a3a3a3" stroke-width="1.1"/><line x1="41.6" y1="433.7" x2="58.6" y2="423.9" stroke="#f22" stroke-width="1.2"/><path d="M51.0 429.7 L51.0 441.5 L53.7 438.9 L55.8 443.9 L58.0 442.9 L55.9 438.1 L59.3 437.6 Z" fill="#e9e9e9" stroke="#8a8a8a" stroke-width="1" stroke-linejoin="round"/><path d="M66.80000000000001 443.9 V448.09999999999997 H62.6 Z" fill="#0a0a0a"/><rect x="1.4" y="461.6" width="34.4" height="34.2" fill="url(#gTool)" stroke="#a3a3a3" stroke-width="1.1"/><path d="M6.800000000000001 474.20000000000005 L19.599999999999998 467.8 L29.0 472.6 V483.0 L16.2 489.40000000000003 L6.800000000000001 484.6 Z M6.800000000000001 474.20000000000005 L16.2 479.0 L29.0 472.6 M16.2 479.0 V489.40000000000003" fill="none" stroke="#1b1b1b" stroke-width="1.2" stroke-linecap="round" stroke-linejoin="round" /><path d="M32.0 488.20000000000005 V492.20000000000005 H28.0 Z" fill="#0a0a0a"/></svg>
<!-- part_props -->
<div class="dock" style="position:absolute;left:1155px;top:107.5px;width:299.5px;height:691px;background:#ececec;"></div>
<div style="position:absolute;left:1155px;top:107.5px;width:1px;height:691px;background:#dadada;"></div>
<div style="position:absolute;left:1453.6px;top:107.5px;width:1px;height:691px;background:#d6d6d6;"></div>
<div style="position:absolute;left:1155px;top:129.3px;width:299px;height:1.2px;background:#c9c9c9;"></div>
<span class="t" style="left:1267.40px;top:112.07px;font-size:12.6px;line-height:15.12px;color:#262626;letter-spacing:-0.333px;">Éditeur de propriétés</span>
<svg style="position:absolute;left:1157px;top:111.5px;" width="32" height="14" viewBox="0 0 32 14"><circle cx="6.9" cy="6.9" r="6.6" fill="#5a5a5a"/><path d="M4.2 4.2 L9.6 9.6 M9.6 4.2 L4.2 9.6" stroke="#f2f2f2" stroke-width="1.9" stroke-linecap="round"/><circle cx="25" cy="6.9" r="6.6" fill="#5a5a5a"/><rect x="23.7" y="3.9" width="4.6" height="4.2" rx=".8" fill="none" stroke="#f2f2f2" stroke-width="1.2"/><rect x="21.5" y="5.9" width="4.8" height="4.2" rx=".8" fill="#5a5a5a" stroke="#f2f2f2" stroke-width="1.2"/></svg>
<div class="vtab sel" style="position:absolute;left:1134.9px;top:313.9px;width:20.1px;height:150px;background:#1684fc;border-radius:3.5px 0 0 3.5px;"></div>
<div class="vtab" style="position:absolute;left:1134.9px;top:468.1px;width:20.1px;height:128px;background:#d3d3d3;border-radius:3.5px 0 0 3.5px;"></div>
<span class="t" style="left:1145.3px;top:388.9px;font-size:13.4px;line-height:16px;color:#fff;transform:translate(-50%,-50%) rotate(-90deg);">Éditeur de propriétés</span>
<span class="t" style="left:1145.3px;top:531.2px;font-size:13.4px;line-height:16px;color:#222;transform:translate(-50%,-50%) rotate(-90deg);">Liste des calques</span>
<span class="t" style="left:1168.60px;top:147.03px;font-size:13.6px;line-height:16.32px;color:#1c1c1c;letter-spacing:-0.110px;">Sélection :</span>
<div style="position:absolute;left:1239.4px;top:143.4px;width:201.8px;height:21.4px;background:#fff;border-radius:5.5px;box-shadow:0 0 0 .6px #cfcfcf,0 .6px 1.2px rgba(0,0,0,.22);"></div>
<span class="t" style="left:1243.20px;top:147.03px;font-size:13.6px;line-height:16.32px;color:#1c1c1c;letter-spacing:-0.262px;">Image [1]</span>
<svg style="position:absolute;left:1422.8px;top:146.1px;" width="16" height="16" viewBox="0 0 16 16"><rect x="0" y="0" width="16" height="16" rx="4" fill="#1684fc"/><path d="M5.1 6.0 L8.0 3.0999999999999996 L10.9 6.0 M5.1 10.0 L8.0 12.9 L10.9 10.0" fill="none" stroke="#fff" stroke-width="1.5" stroke-linecap="round" stroke-linejoin="round"/></svg>
<span class="t" style="left:1175.20px;top:170.22px;font-size:11.6px;line-height:13.92px;color:#1c1c1c;letter-spacing:0.082px;">Propriétés générales</span>
<div style="position:absolute;left:1168.4px;top:183.2px;width:273.2px;height:185px;background:#e4e4e4;border-radius:6px;box-shadow:inset 0 0 0 1px #dcdcdc;"></div>
<span class="t" style="left:1245.20px;top:198.73px;font-size:13.6px;line-height:16.32px;color:#1c1c1c;letter-spacing:-0.322px;">Calque :</span>
<div style="position:absolute;left:1296.6px;top:195.8px;width:107.4px;height:20.6px;background:#fff;border-radius:5.5px;box-shadow:0 0 0 .6px #cfcfcf,0 .6px 1.2px rgba(0,0,0,.22);"></div>
<div style="position:absolute;left:1300px;top:201.7px;width:16px;height:9.2px;background:#000;"></div>
<span class="t" style="left:1322.00px;top:198.73px;font-size:13.6px;line-height:16.32px;color:#1c1c1c;letter-spacing:-0.400px;">Image</span>
<svg style="position:absolute;left:1386px;top:198px;" width="16" height="16" viewBox="0 0 16 16"><rect x="0" y="0" width="16" height="16" rx="4" fill="#1684fc"/><path d="M5.1 6.0 L8.0 3.0999999999999996 L10.9 6.0 M5.1 10.0 L8.0 12.9 L10.9 10.0" fill="none" stroke="#fff" stroke-width="1.5" stroke-linecap="round" stroke-linejoin="round"/></svg>
<div style="position:absolute;left:1407px;top:193.3px;width:25.6px;height:25.4px;background:#ececec;border:1px solid #b1b1b1;box-sizing:border-box;"></div>
<svg style="position:absolute;left:1412.4px;top:200.2px;" width="15" height="12" viewBox="0 0 15 12"><path d="M.6 1.2 H14 M.6 5.8 H14 M.6 10.4 H14" stroke="#868686" stroke-width="1.9"/></svg>
<span class="t" style="left:1240.40px;top:224.53px;font-size:13.6px;line-height:16.32px;color:#1c1c1c;letter-spacing:-0.248px;">Couleur :</span>
<div style="position:absolute;left:1296.6px;top:222px;width:135.4px;height:20px;background:#fff;border-radius:5.5px;box-shadow:0 0 0 .6px #cfcfcf,0 .6px 1.2px rgba(0,0,0,.22);"></div>
<div style="position:absolute;left:1300px;top:227.6px;width:16px;height:9.2px;background:#fff;border:1px solid #222;box-sizing:border-box;"></div>
<span class="t" style="left:1322.00px;top:224.53px;font-size:13.6px;line-height:16.32px;color:#1c1c1c;letter-spacing:-0.313px;">Par calque</span>
<svg style="position:absolute;left:1414px;top:224px;" width="16" height="16" viewBox="0 0 16 16"><rect x="0" y="0" width="16" height="16" rx="4" fill="#1684fc"/><path d="M5.1 6.0 L8.0 3.0999999999999996 L10.9 6.0 M5.1 10.0 L8.0 12.9 L10.9 10.0" fill="none" stroke="#fff" stroke-width="1.5" stroke-linecap="round" stroke-linejoin="round"/></svg>
<span class="t" style="left:1178.20px;top:248.73px;font-size:13.6px;line-height:16.32px;color:#1c1c1c;letter-spacing:-0.213px;">Épaisseur de ligne :</span>
<div style="position:absolute;left:1296.6px;top:246.2px;width:135.4px;height:20px;background:#fff;border-radius:5.5px;box-shadow:0 0 0 .6px #cfcfcf,0 .6px 1.2px rgba(0,0,0,.22);"></div>
<div style="position:absolute;left:1300px;top:256px;width:16px;height:1px;background:#222;"></div>
<span class="t" style="left:1322.00px;top:248.73px;font-size:13.6px;line-height:16.32px;color:#1c1c1c;letter-spacing:-0.313px;">Par calque</span>
<svg style="position:absolute;left:1414px;top:248.2px;" width="16" height="16" viewBox="0 0 16 16"><rect x="0" y="0" width="16" height="16" rx="4" fill="#1684fc"/><path d="M5.1 6.0 L8.0 3.0999999999999996 L10.9 6.0 M5.1 10.0 L8.0 12.9 L10.9 10.0" fill="none" stroke="#fff" stroke-width="1.5" stroke-linecap="round" stroke-linejoin="round"/></svg>
<span class="t" style="left:1208.60px;top:272.63px;font-size:13.6px;line-height:16.32px;color:#1c1c1c;letter-spacing:-0.247px;">Type de ligne :</span>
<div style="position:absolute;left:1296.6px;top:270px;width:135.4px;height:20px;background:#fff;border-radius:5.5px;box-shadow:0 0 0 .6px #cfcfcf,0 .6px 1.2px rgba(0,0,0,.22);"></div>
<span class="t" style="left:1300.20px;top:271.43px;font-size:13.6px;line-height:16.32px;color:#1c1c1c;letter-spacing:-0.313px;">Par calque</span>
<svg style="position:absolute;left:1414px;top:272px;" width="16" height="16" viewBox="0 0 16 16"><rect x="0" y="0" width="16" height="16" rx="4" fill="#1684fc"/><path d="M5.1 6.0 L8.0 3.0999999999999996 L10.9 6.0 M5.1 10.0 L8.0 12.9 L10.9 10.0" fill="none" stroke="#fff" stroke-width="1.5" stroke-linecap="round" stroke-linejoin="round"/></svg>
<span class="t" style="left:1195.60px;top:296.33px;font-size:13.6px;line-height:16.32px;color:#1c1c1c;letter-spacing:-0.160px;">Échelle du type :</span>
<div style="position:absolute;left:1296.8px;top:294.2px;width:135.2px;height:19.2px;background:#fff;box-shadow:0 0 0 .5px #d9d9d9,0 .8px 0 0 #ababab;"></div>
<span class="t" style="left:1298.40px;top:296.33px;font-size:13.6px;line-height:16.32px;color:#1c1c1c;">1</span>
<span class="t" style="left:1192.20px;top:319.23px;font-size:13.6px;line-height:16.32px;color:#1c1c1c;letter-spacing:-0.182px;">Ordre de dessin :</span>
<div style="position:absolute;left:1296.8px;top:317.1px;width:135.2px;height:19.2px;background:#fff;box-shadow:0 0 0 .5px #d9d9d9,0 .8px 0 0 #ababab;"></div>
<span class="t" style="left:1298.40px;top:319.23px;font-size:13.6px;line-height:16.32px;color:#1c1c1c;">0</span>
<span class="t" style="left:1239.00px;top:342.23px;font-size:13.6px;line-height:16.32px;color:#1c1c1c;letter-spacing:-0.359px;">Poignée :</span>
<div style="position:absolute;left:1296.8px;top:340.1px;width:135.2px;height:19.2px;background:#fff;box-shadow:0 0 0 .5px #d9d9d9,0 .8px 0 0 #ababab;"></div>
<span class="t" style="left:1298.40px;top:342.23px;font-size:13.6px;line-height:16.32px;color:#b9b9b9;letter-spacing:0.386px;">0x363</span>
<span class="t" style="left:1175.20px;top:374.42px;font-size:11.6px;line-height:13.92px;color:#1c1c1c;letter-spacing:0.175px;">Propriétés spécifiques</span>
<div style="position:absolute;left:1168.4px;top:387.4px;width:273.2px;height:241px;background:#e4e4e4;border-radius:6px;box-shadow:inset 0 0 0 1px #dcdcdc;"></div>
<span class="t" style="left:1255.80px;top:399.93px;font-size:13.6px;line-height:16.32px;color:#1c1c1c;letter-spacing:-0.290px;">Angle :</span>
<div style="position:absolute;left:1299.8px;top:397.7px;width:132.2px;height:19.2px;background:#fff;box-shadow:0 0 0 .5px #d9d9d9,0 .8px 0 0 #ababab;"></div>
<span class="t" style="left:1301.40px;top:400.23px;font-size:13.6px;line-height:16.32px;color:#1c1c1c;letter-spacing:0.039px;">4.57593512</span>
<span class="t" style="left:1249.60px;top:422.93px;font-size:13.6px;line-height:16.32px;color:#1c1c1c;letter-spacing:-0.195px;">Fichier :</span>
<div style="position:absolute;left:1299.8px;top:420.7px;width:132.2px;height:19.2px;background:#fff;box-shadow:0 0 0 .5px #d9d9d9,0 .8px 0 0 #ababab;"></div>
<span class="t" style="left:1301.40px;top:423.23px;font-size:13.6px;line-height:16.32px;color:#1c1c1c;letter-spacing:-0.076px;">Marteau.png</span>
<span class="t" style="left:1180.80px;top:445.93px;font-size:13.6px;line-height:16.32px;color:#1c1c1c;letter-spacing:-0.162px;">Facteur de largeur :</span>
<div style="position:absolute;left:1299.8px;top:443.7px;width:132.2px;height:19.2px;background:#fff;box-shadow:0 0 0 .5px #d9d9d9,0 .8px 0 0 #ababab;"></div>
<span class="t" style="left:1301.40px;top:446.23px;font-size:13.6px;line-height:16.32px;color:#1c1c1c;letter-spacing:0.105px;">0.19066545</span>
<span class="t" style="left:1177.40px;top:468.93px;font-size:13.6px;line-height:16.32px;color:#1c1c1c;letter-spacing:-0.183px;">Facteur de hauteur :</span>
<div style="position:absolute;left:1299.8px;top:466.7px;width:132.2px;height:19.2px;background:#fff;box-shadow:0 0 0 .5px #d9d9d9,0 .8px 0 0 #ababab;"></div>
<span class="t" style="left:1301.40px;top:469.23px;font-size:13.6px;line-height:16.32px;color:#1c1c1c;letter-spacing:0.105px;">0.19066545</span>
<span class="t" style="left:1244.00px;top:491.93px;font-size:13.6px;line-height:16.32px;color:#1c1c1c;letter-spacing:-0.254px;">Largeur :</span>
<div style="position:absolute;left:1299.8px;top:489.7px;width:132.2px;height:19.2px;background:#fff;box-shadow:0 0 0 .5px #d9d9d9,0 .8px 0 0 #ababab;"></div>
<span class="t" style="left:1301.40px;top:492.23px;font-size:13.6px;line-height:16.32px;color:#1c1c1c;letter-spacing:0.311px;">268.26628208</span>
<span class="t" style="left:1242.60px;top:514.93px;font-size:13.6px;line-height:16.32px;color:#1c1c1c;letter-spacing:-0.268px;">Hauteur :</span>
<div style="position:absolute;left:1299.8px;top:512.7px;width:132.2px;height:19.2px;background:#fff;box-shadow:0 0 0 .5px #d9d9d9,0 .8px 0 0 #ababab;"></div>
<span class="t" style="left:1301.40px;top:515.23px;font-size:13.6px;line-height:16.32px;color:#1c1c1c;letter-spacing:-0.089px;">128.69917584</span>
<span class="t" style="left:1222.80px;top:537.93px;font-size:13.6px;line-height:16.32px;color:#1c1c1c;letter-spacing:-0.275px;">Estompage :</span>
<div style="position:absolute;left:1299.8px;top:535.7px;width:132.2px;height:19.2px;background:#fff;box-shadow:0 0 0 .5px #d9d9d9,0 .8px 0 0 #ababab;"></div>
<span class="t" style="left:1301.40px;top:538.23px;font-size:13.6px;line-height:16.32px;color:#1c1c1c;">0</span>
<span class="t" style="left:1177.50px;top:559.21px;font-size:13.2px;line-height:15.84px;color:#111;letter-spacing:-0.152px;font-weight:bold;">Position</span>
<span class="t" style="left:1281.80px;top:579.13px;font-size:13.6px;line-height:16.32px;color:#1c1c1c;letter-spacing:-1.014px;">X :</span>
<div style="position:absolute;left:1299.8px;top:576.9px;width:132.2px;height:19.2px;background:#fff;box-shadow:0 0 0 .5px #d9d9d9,0 .8px 0 0 #ababab;"></div>
<span class="t" style="left:1301.40px;top:579.43px;font-size:13.6px;line-height:16.32px;color:#1c1c1c;letter-spacing:0.102px;">-6.02275124</span>
<span class="t" style="left:1281.80px;top:602.13px;font-size:13.6px;line-height:16.32px;color:#1c1c1c;letter-spacing:-0.891px;">Y :</span>
<div style="position:absolute;left:1299.8px;top:599.9px;width:132.2px;height:19.2px;background:#fff;box-shadow:0 0 0 .5px #d9d9d9,0 .8px 0 0 #ababab;"></div>
<span class="t" style="left:1301.40px;top:602.43px;font-size:13.6px;line-height:16.32px;color:#1c1c1c;letter-spacing:0.222px;">-66.1660044</span>
<span class="t" style="left:1175.20px;top:634.32px;font-size:11.6px;line-height:13.92px;color:#1c1c1c;letter-spacing:-0.042px;">Personnalisé</span>
<div style="position:absolute;left:1168.4px;top:647.2px;width:273.2px;height:52.6px;background:#e4e4e4;border-radius:6px;box-shadow:inset 0 0 0 1px #dcdcdc;"></div>
<div style="position:absolute;left:1405.2px;top:663px;width:21.8px;height:21.8px;background:#f3f3f3;border:1px solid #a9a9a9;box-sizing:border-box;"></div>
<svg style="position:absolute;left:1411.2px;top:669px;" width="10" height="10" viewBox="0 0 10 10"><path d="M1 5 H9 M5 1 V9" stroke="#d0021b" stroke-width="1.9"/></svg>
<!-- part_right -->
<svg style="position:absolute;left:0px;top:0px;overflow:hidden;" width="1500" height="844" viewBox="0 0 1500 844"><defs><linearGradient id="gRight" x1="0" y1="0" x2="1" y2="0"><stop offset="0" stop-color="#e9e9e9"/><stop offset=".45" stop-color="#dedede"/><stop offset="1" stop-color="#bdbdbd"/></linearGradient></defs><rect x="1454.6" y="107.5" width="45.4" height="691" fill="url(#gRight)"/><rect x="1454.6" y="107.5" width="1" height="691" fill="#f4f4f4"/><rect x="1461.8" y="115.8" width="2" height="2" fill="#b0b0b0"/><rect x="1467.8" y="115.8" width="2" height="2" fill="#b0b0b0"/><rect x="1473.9" y="115.8" width="2" height="2" fill="#b0b0b0"/><rect x="1480.0" y="115.8" width="2" height="2" fill="#b0b0b0"/><rect x="1486.0" y="115.8" width="2" height="2" fill="#b0b0b0"/><rect x="1456" y="120.4" width="46" height="42.4" rx="5" fill="#b8b8b8"/><rect x="1463.2" y="127.2" width="27.8" height="27.4" fill="#fff" stroke="#2a2a2a" stroke-width=".9"/><rect x="1463.2" y="127.2" width="27.8" height="5.2" fill="#000"/><rect x="1464.1000000000001" y="128.1" width="3.2" height="3.2" fill="#fff"/><g transform="translate(1477.4 144) skewY(-22)"><rect x="-7" y="-5.4" width="9.6" height="10.4" fill="#d5d5d5" stroke="#555" stroke-width=".6"/><rect x="-5.2" y="-5" width="9.6" height="10.4" fill="#c9c9c9" stroke="#555" stroke-width=".6"/><rect x="-3.4" y="-4.6" width="9.6" height="10.4" fill="#f2f2f2" stroke="#555" stroke-width=".6"/><path d="M-0.6 4.4 L4.6 -2.4 L4.6 4.4 Z M1.6 1.4 l1.6 0" fill="none" stroke="#e2242a" stroke-width=".9"/></g><rect x="1463.2" y="174.2" width="27.8" height="27.4" fill="#fff" stroke="#2a2a2a" stroke-width=".9"/><rect x="1463.2" y="174.2" width="27.8" height="5.2" fill="#000"/><rect x="1464.1000000000001" y="175.1" width="3.2" height="3.2" fill="#fff"/><rect x="1470.2" y="184.4" width="10.4" height="7.6" fill="#f6ecc0" stroke="#333" stroke-width=".7"/><circle cx="1479.6" cy="191.6" r="4.2" fill="#f6ecc0" stroke="#333" stroke-width=".7"/><path d="M1475.6 192 H1480.6 V187.4" fill="none" stroke="#333" stroke-width=".7"/><rect x="1463.2" y="220.2" width="27.8" height="27.4" fill="#fff" stroke="#2a2a2a" stroke-width=".9"/><rect x="1463.2" y="220.2" width="27.8" height="5.2" fill="#000"/><rect x="1464.1000000000001" y="221.1" width="3.2" height="3.2" fill="#fff"/><rect x="1468.8" y="230.4" width="16.4" height="10.6" rx="2" fill="#f4f3f0" stroke="#c4d2ea" stroke-width="1"/><line x1="1458" y1="261.6" x2="1500" y2="261.6" stroke="#5e5e5e" stroke-width="1" stroke-dasharray="1 2"/><rect x="1456" y="269.2" width="46" height="42.4" rx="5" fill="#b8b8b8"/><rect x="1463.2" y="276.4" width="27.8" height="27.4" fill="#fff" stroke="#2a2a2a" stroke-width=".9"/><rect x="1463.2" y="276.4" width="27.8" height="5.2" fill="#000"/><rect x="1464.1000000000001" y="277.29999999999995" width="3.2" height="3.2" fill="#fff"/><rect x="1466.2" y="284.3" width="4.2" height="3.2" fill="#000"/><rect x="1473.4" y="284.3" width="14" height="3.2" fill="#fff" stroke="#222" stroke-width=".6"/><rect x="1466.2" y="290.2" width="4.2" height="3.2" fill="#000"/><rect x="1473.4" y="290.2" width="14" height="3.2" fill="#fff" stroke="#222" stroke-width=".6"/><rect x="1466.2" y="296.2" width="4.2" height="3.2" fill="#000"/><rect x="1473.4" y="296.2" width="14" height="3.2" fill="#fff" stroke="#222" stroke-width=".6"/><rect x="1463.2" y="323.4" width="27.8" height="27.4" fill="#fff" stroke="#2a2a2a" stroke-width=".9"/><rect x="1463.2" y="323.4" width="27.8" height="5.2" fill="#000"/><rect x="1464.1000000000001" y="324.29999999999995" width="3.2" height="3.2" fill="#fff"/><path d="M1470 333.6 Q1477 331.4 1484 333.6 Q1480 338.6 1478.6 340.4 V347 L1475.6 345.6 V340.4 Q1474 338.6 1470 333.6Z" fill="#b9b9b9" stroke="#6f6f6f" stroke-width=".6"/><ellipse cx="1477" cy="333.6" rx="7" ry="1.6" fill="#8f8f8f"/><rect x="1463.2" y="369.4" width="27.8" height="27.4" fill="#fff" stroke="#2a2a2a" stroke-width=".9"/><rect x="1463.2" y="369.4" width="27.8" height="5.2" fill="#000"/><rect x="1464.1000000000001" y="370.29999999999995" width="3.2" height="3.2" fill="#fff"/><path d="M1469.6 378.4 L1474.6 381.6 V389 L1469.6 392.2 Z" fill="#fff" stroke="#222" stroke-width=".8"/><rect x="1474.6" y="381.6" width="10.6" height="7.4" rx="1.4" fill="#7b7b7b"/><path d="M1476 382 v6.6 M1478 382 v6.6 M1480 382 v6.6 M1482 382 v6.6" stroke="#a9a9a9" stroke-width=".7"/><line x1="1467.6" y1="385.3" x2="1488" y2="385.3" stroke="#f08a8a" stroke-width=".8" stroke-dasharray="2.2 1"/><line x1="1458" y1="410.6" x2="1500" y2="410.6" stroke="#5e5e5e" stroke-width="1" stroke-dasharray="1 2"/><rect x="1456" y="418.4" width="46" height="42.4" rx="5" fill="#b8b8b8"/><rect x="1463.2" y="425.2" width="27.8" height="27.4" fill="#fff" stroke="#2a2a2a" stroke-width=".9"/><rect x="1463.2" y="425.2" width="27.8" height="5.2" fill="#000"/><rect x="1464.1000000000001" y="426.09999999999997" width="3.2" height="3.2" fill="#fff"/><rect x="1466" y="433.0" width="13.6" height="1.1" fill="#5a5a5a" fill-opacity=".75"/><rect x="1466" y="436.4" width="12.6" height="1.1" fill="#5a5a5a" fill-opacity=".75"/><rect x="1466" y="439.8" width="15.4" height="1.1" fill="#5a5a5a" fill-opacity=".75"/><rect x="1466" y="443.2" width="16.4" height="1.1" fill="#5a5a5a" fill-opacity=".75"/><line x1="1463.4" y1="447.8" x2="1491" y2="447.8" stroke="#222" stroke-width=".7"/><rect x="1472" y="449.2" width="16" height="1.6" fill="#3c3c3c" fill-opacity=".85"/><path d="M1467.8 449 l-1.8 1.2 l1.8 1.2" stroke="#333" stroke-width=".6" fill="none"/><rect x="1463.2" y="472" width="27.8" height="27.4" fill="#fff" stroke="#2a2a2a" stroke-width=".9"/><rect x="1463.2" y="472" width="27.8" height="5.2" fill="#000"/><rect x="1464.1000000000001" y="472.9" width="3.2" height="3.2" fill="#fff"/><rect x="1470.8" y="482" width="12.6" height="14" rx="1" fill="#c98a36" stroke="#9a6418" stroke-width=".6"/><path d="M1472.4 483.6 H1482 V492.6 L1480 494.6 H1472.4 Z" fill="#f1f1f1" stroke="#a8a8a8" stroke-width=".4"/><path d="M1482 492.6 H1480 V494.6 Z" fill="#8e8e8e"/><rect x="1474.4" y="481" width="5.6" height="2.4" rx=".8" fill="#9b9b92" stroke="#76766d" stroke-width=".4"/><path d="M1474 486.4 h6.4 M1474 488.2 h6.4 M1474 490 h5" stroke="#c2c2c2" stroke-width=".6"/><line x1="1458" y1="513.6" x2="1500" y2="513.6" stroke="#5e5e5e" stroke-width="1" stroke-dasharray="1 2"/><text x="1477.6" y="551.2" text-anchor="middle" font-family="DejaVu Sans Light, DejaVu Sans, Liberation Sans, sans-serif" font-weight="200" font-size="23.6" fill="#111" textLength="27" lengthAdjust="spacingAndGlyphs">3D</text><defs><radialGradient id="gHalo" cx="1485.8" cy="301" r="39.5" gradientUnits="userSpaceOnUse"><stop offset="0" stop-color="#a9bdd2" stop-opacity="0"/><stop offset=".8" stop-color="#a9bdd2" stop-opacity=".05"/><stop offset=".84" stop-color="#9db4cc" stop-opacity=".55"/><stop offset=".9" stop-color="#a9bfd6" stop-opacity=".7"/><stop offset=".95" stop-color="#b9cadc" stop-opacity=".5"/><stop offset="1" stop-color="#c9d6e4" stop-opacity="0"/></radialGradient></defs><circle cx="1485.8" cy="301" r="39.5" fill="url(#gHalo)"/><path d="M1486.9 299.9 L1486.9 321.7 L1491.8 317.2 L1495.7 326.1 L1499.9 324.3 L1496.1 315.6 L1502.7 315.2 Z" fill="#fff" stroke="#0a0a0a" stroke-width="1.5" stroke-linejoin="miter"/></svg>
</div></body></html>
